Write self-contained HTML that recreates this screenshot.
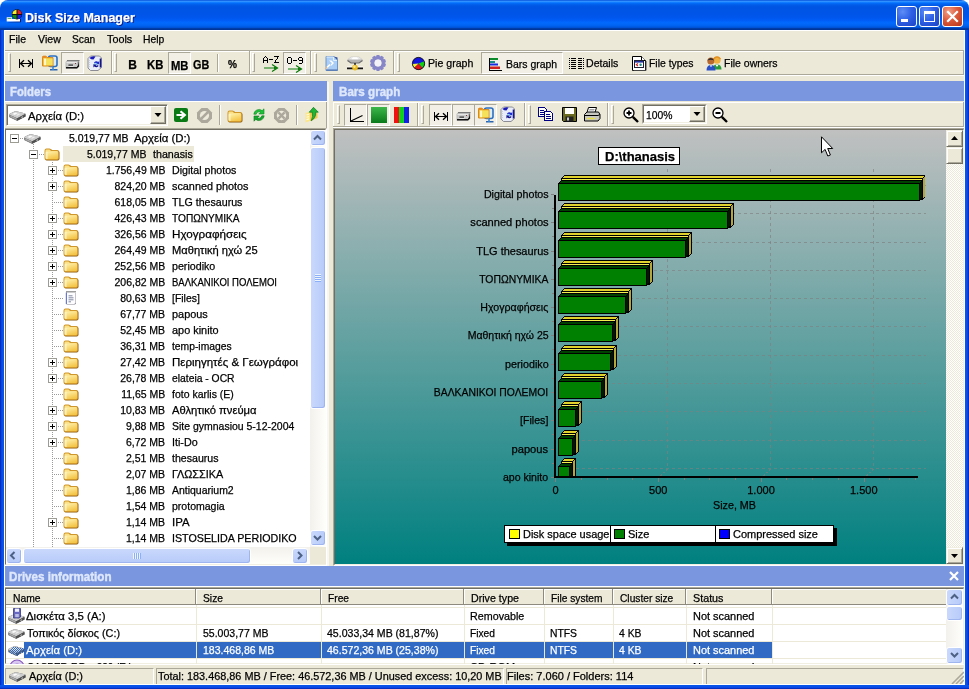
<!DOCTYPE html><html><head><meta charset="utf-8"><title>Disk Size Manager</title><style>
*{box-sizing:border-box;margin:0;padding:0}
html,body{width:969px;height:689px;overflow:hidden;background:#fff}
body{position:relative;font-family:"Liberation Sans",sans-serif;font-size:11px;color:#000;line-height:1}
.a{position:absolute}
.t{position:absolute;white-space:nowrap;line-height:13px;height:13px;transform-origin:0 50%;-webkit-text-stroke:.25px}
.r{text-align:right}
#win{position:absolute;left:0;top:0;width:969px;height:689px;background:#ECE9D8;border-radius:8px 8px 0 0;overflow:hidden;filter:brightness(1)}
#title{position:absolute;left:0;top:0;width:969px;height:30px;background:linear-gradient(to bottom,#0046d8 0%,#3593ff 4%,#288eff 6%,#127dff 8%,#036ffc 10%,#0262ee 14%,#0057e5 20%,#0054e3 24%,#0055eb 56%,#005bf5 66%,#026afe 76%,#0062ef 86%,#0052d6 92%,#0040ab 94%,#003092 100%)}
.hdr{position:absolute;background:#7A96DF;color:#D6DFF5;font-weight:bold;font-size:12px}
.sunk{position:absolute;border:1px solid;border-color:#ACA899 #fff #fff #ACA899}
.grip{position:absolute;width:3px;height:19px;border:1px solid;border-color:#fff #ACA899 #ACA899 #fff}
.vsep{position:absolute;width:2px;border-left:1px solid #ACA899;border-right:1px solid #fff}
.pressed{position:absolute;border:1px solid;border-color:#ACA899 #fff #fff #ACA899;background:#F2F0E6}
.tb{position:absolute;font-weight:bold;font-size:12px;line-height:14px;height:14px;white-space:nowrap}
.wb{position:absolute;top:6px;width:21px;height:21px;border:1px solid #fff;border-radius:3px}
svg{position:absolute;overflow:visible}
</style></head><body>
<div id="win">
<div id="title"></div>
<div class="t" style="left:24.700px;top:10px;font-size:13px;font-weight:bold;color:#fff;line-height:16px;height:16px;text-shadow:1px 1px 0 #0A1883;transform:scaleX(.962)">Disk Size Manager</div>
<svg style="left:6px;top:9px" width="17" height="15" viewBox="0 0 17 15"><path d="M1.200 13.200H14.800V10h-1v2.300z" fill="#0a0a50"/><path d="M0.700 8.300H6V10h8v2.400H0.700z" fill="#fff"/><path d="M1.500 9.200h4v.9h-4z" fill="#2f9a2f"/><circle cx="11" cy="5.400" r="5.100" fill="#101010"/><path d="M10.500 0.800A4.600 4.600 0 0 0 6.400 4.900H10.500z" fill="#f6f02a"/><path d="M11.500 0.800A4.600 4.600 0 0 1 15.600 4.900H11.500z" fill="#e21c28"/><path d="M10.500 5.900H6.400A4.600 4.600 0 0 0 10.500 10z" fill="#0f8a0f"/><path d="M11.500 5.900h4.100A4.600 4.600 0 0 1 11.500 10z" fill="#1a1ae0"/></svg>
<div class="wb" style="left:896px;background:radial-gradient(circle at 30% 25%,#5d8df6 0,#2f61e6 45%,#1c43c4 100%)"><div class="a" style="left:4px;top:12px;width:7px;height:3px;background:#fff"></div></div>
<div class="wb" style="left:919px;background:radial-gradient(circle at 30% 25%,#5d8df6 0,#2f61e6 45%,#1c43c4 100%)"><div class="a" style="left:4px;top:4px;width:11px;height:11px;border:1px solid #fff;border-top:3px solid #fff"></div></div>
<div class="wb" style="left:942px;background:radial-gradient(circle at 30% 25%,#f0a088 0,#dc5a3c 45%,#b83418 100%)"><svg style="left:4px;top:4px" width="11" height="11" viewBox="0 0 11 11"><path d="M1 1L10 10M10 1L1 10" stroke="#fff" stroke-width="2.2" stroke-linecap="square"/></svg></div>
<div class="a" style="left:0;top:30px;width:4px;height:659px;background:linear-gradient(to right,#001EA0 0,#0A40E0 1px,#0855EA 3px,#0855EA 4px)"></div>
<div class="a" style="left:965px;top:30px;width:4px;height:659px;background:linear-gradient(to left,#001EA0 0,#0A40E0 1px,#0855EA 3px,#0855EA 4px)"></div>
<div class="a" style="left:0;top:685px;width:969px;height:4px;background:linear-gradient(to top,#001EA0 0,#0A40E0 1px,#0855EA 3px,#0855EA 4px)"></div>
<div class="t" style="left:9.3px;top:33px;transform:scaleX(0.9594);">File</div>
<div class="t" style="left:37.5px;top:33px;transform:scaleX(0.9644);">View</div>
<div class="t" style="left:71.5px;top:33px;transform:scaleX(0.9285);">Scan</div>
<div class="t" style="left:106.8px;top:33px;transform:scaleX(0.9810);">Tools</div>
<div class="t" style="left:143.3px;top:33px;transform:scaleX(0.9414);">Help</div>
<div class="a" style="left:4px;top:50px;width:961px;height:1px;background:#ACA899"></div>
<div class="a" style="left:4px;top:51px;width:961px;height:1px;background:#fff"></div>
<div class="a" style="left:4px;top:74px;width:961px;height:1px;background:#ACA899"></div>
<div class="a" style="left:4px;top:75px;width:961px;height:1px;background:#fff"></div>
<div class="a" style="left:963px;top:51px;width:1px;height:24px;background:#ACA899"></div>
<div class="grip" style="left:8px;top:53px"></div>
<div class="grip" style="left:114px;top:53px"></div>
<div class="grip" style="left:252px;top:53px"></div>
<div class="grip" style="left:314px;top:53px"></div>
<div class="grip" style="left:397px;top:53px"></div>
<div class="vsep" style="left:111px;top:51px;height:23px"></div>
<div class="vsep" style="left:249px;top:51px;height:23px"></div>
<div class="vsep" style="left:310px;top:51px;height:23px"></div>
<div class="vsep" style="left:393px;top:51px;height:23px"></div>
<div class="vsep" style="left:217px;top:54px;height:18px"></div>
<div class="pressed" style="left:61px;top:52px;width:23px;height:22px"></div>
<div class="pressed" style="left:168px;top:52px;width:23px;height:22px"></div>
<div class="pressed" style="left:283px;top:52px;width:23px;height:22px"></div>
<div class="pressed" style="left:481px;top:52px;width:82px;height:22px"></div>
<div class="t" style="font-size:12px;line-height:14px;height:14px;font-weight:bold;left:128.3px;top:57.5px;">B</div>
<div class="t" style="font-size:12px;line-height:14px;height:14px;font-weight:bold;left:147.3px;top:57.5px;transform:scaleX(0.9398);">KB</div>
<div class="t" style="font-size:12px;line-height:14px;height:14px;font-weight:bold;left:171px;top:58.5px;transform:scaleX(0.9372);">MB</div>
<div class="t" style="font-size:12px;line-height:14px;height:14px;font-weight:bold;left:193.3px;top:57.5px;transform:scaleX(0.9000);">GB</div>
<div class="t" style="font-weight:bold;left:228.3px;top:57.5px;transform:scaleX(0.9201);">%</div>
<div class="t" style="left:428.3px;top:57px;transform:scaleX(0.9634);">Pie graph</div>
<div class="t" style="left:505.6px;top:58px;transform:scaleX(0.9509);">Bars graph</div>
<div class="t" style="left:586.2px;top:57px;transform:scaleX(0.9606);">Details</div>
<div class="t" style="left:649px;top:57px;transform:scaleX(0.9470);">File types</div>
<div class="t" style="left:724px;top:57px;transform:scaleX(0.9529);">File owners</div>
<svg style="left:19px;top:59px" width="15" height="9" viewBox="0 0 15 9" ><path d="M0.5 0v9M13.5 0v9M1 4.5h12" stroke="#000" stroke-width="1" fill="none"/><path d="M1.5 4.5L5 1.2M1.5 4.5L5 7.8M12.5 4.5L9 1.2M12.5 4.5L9 7.8" stroke="#000" stroke-width="1.3" fill="none"/></svg>
<svg style="left:42px;top:55px" width="16" height="16" viewBox="0 0 16 16" ><rect x="6.5" y="1" width="8.5" height="10.5" rx="2" fill="#d8ecfb" stroke="#2c6fc0" stroke-width="1.6"/><path d="M8 14.8h7.5" stroke="#2a64b0" stroke-width="1.4"/><path d="M11 12v3" stroke="#3a86d6" stroke-width="1.6"/><path d="M0.5 2.2q0-1 1-1h2.2q1 0 1 1v0.4h6.3v8.4h-10.5z" fill="#f4c23a" stroke="#d98a1a" stroke-width="1"/><rect x="2" y="3.6" width="8.5" height="6.6" fill="#f6e25a"/><rect x="2" y="3.6" width="2" height="6.6" fill="#fdf6c8"/><rect x="0.6" y="1.2" width="3.6" height="1.6" fill="#e8831c"/></svg>
<svg style="left:65px;top:60px" width="15" height="9" viewBox="0 0 15 9" ><path d="M2 0.5h12.5v6l-2 2H0.5V2z" fill="#b9b9b9"/><path d="M2 0.5h12.5" stroke="#7a7a7a"/><path d="M14 0.5v6l-2 2H1v-1.5h10.5l1.5-1.5z" fill="#111"/><rect x="1.5" y="2" width="10.5" height="5" fill="#c9c9c9"/><rect x="1.5" y="2" width="10.5" height="1" fill="#e6e6e6"/><rect x="3.5" y="4.6" width="4.5" height="1.2" fill="#111"/><rect x="3.5" y="5.8" width="5" height="0.8" fill="#fff"/><rect x="10" y="3" width="1" height="1" fill="#7a3a3a"/></svg>
<svg style="left:87px;top:55px" width="15" height="16" viewBox="0 0 15 16" ><path d="M1 3.5L3.5 1h9L14.5 3v9.5L11 15.5H3.5L1 13z" fill="#e9edf9" stroke="#8c8c94" stroke-width="1"/><path d="M2.5 3q2-2.4 6-1.6L6.5 4.6Q4 4.6 2.5 3z" fill="#1a1ab8"/><path d="M13.5 3.5v9" stroke="#14148c" stroke-width="1.6"/><path d="M2.2 5v8" stroke="#c8c8d0" stroke-width="1.2" stroke-dasharray="1 1"/><path d="M7 7.5q2-2 4.2-0.6l1-1v3.4H8.8l1.1-1.1q-1.2-.8-2.2.3z" fill="#1c2ccc"/><path d="M11.6 11q-2 2-4.2.6l-1 1V9.2h3.4l-1.1 1.1q1.2.8 2.2-.3z" fill="#14148c"/><path d="M7.4 9h3" stroke="#58b8f0" stroke-width="1.2"/></svg>
<svg style="left:263px;top:56px" width="20" height="16" viewBox="0 0 20 16"><path d="M0.5 7V2.5L2.5 0.5L4.5 2.5V7M0.5 4.5H4.5M6 3.5H10M11 0.5H15.5L11.5 6.5H16" stroke="#000" stroke-width="1" fill="none" shape-rendering="crispEdges"/></svg>
<svg style="left:287px;top:57px" width="20" height="16" viewBox="0 0 20 16"><path d="M0.5 1.5V5.5L1.5 6.5H3.5L4.5 5.5V1.5L3.5 0.5H1.5zM6 3.5H10M15.5 3.5H12.5L11.5 2.5V1.5L12.5 0.5H14.5L15.5 1.5V5.5L14.5 6.5H12" stroke="#000" stroke-width="1" fill="none" shape-rendering="crispEdges"/></svg>
<svg style="left:264px;top:64px" width="15" height="8" viewBox="0 0 15 8" ><path d="M0 4h13" stroke="#0a7a0a" stroke-width="1.2"/><path d="M8 0.5L13.5 4L8 7.5" stroke="#0a7a0a" stroke-width="1.2" fill="none"/><path d="M10 2.5L13.5 4L10 5.5z" fill="#0a7a0a"/></svg>
<svg style="left:288px;top:65px" width="15" height="8" viewBox="0 0 15 8" ><path d="M0 4h13" stroke="#0a7a0a" stroke-width="1.2"/><path d="M8 0.5L13.5 4L8 7.5" stroke="#0a7a0a" stroke-width="1.2" fill="none"/><path d="M10 2.5L13.5 4L10 5.5z" fill="#0a7a0a"/></svg>
<svg style="left:325px;top:56px" width="13" height="15" viewBox="0 0 13 15" ><path d="M1 0.5h8l3.5 3.5v10.5H1z" fill="#a9cdf4" stroke="#6f94c8" stroke-width="1"/><path d="M1.5 1h7v3.5h3.5" fill="none" stroke="#e4f1fd" stroke-width="1"/><path d="M9 0.5l3.5 3.5V1.5z" fill="#2a4a9a"/><path d="M1.5 14h11" stroke="#4a6aa8" stroke-width="1.2"/><path d="M1 12.5L5 8.5" stroke="#fff" stroke-width="1.6"/><path d="M4 4.5h2.5L9 7L6.5 9.5H5.2L7 7z" fill="#fff"/><path d="M0.2 13L2 11" stroke="#d8b89a" stroke-width="1.5"/></svg>
<svg style="left:347px;top:56px" width="16" height="15" viewBox="0 0 16 15" ><path d="M0.5 3.5L4 0.8h8L15.5 3.5V5L12 7H4L0.5 5z" fill="#b4b4b4"/><path d="M4 1h8l3 2.5H1z" fill="#e8e8e8"/><path d="M6 1.2h4l1.5 2h-7z" fill="#fff"/><path d="M0.5 4.5L4 7h8l3.5-2.5" stroke="#6e6e6e" fill="none" stroke-width="1.2"/><path d="M8 7v2" stroke="#222" stroke-width="1.6"/><path d="M0 11h16" stroke="#fff" stroke-width="1.2"/><path d="M0 12.4h16" stroke="#111" stroke-width="1.8"/><circle cx="8" cy="11.6" r="2.8" fill="#e8b820"/><circle cx="7.4" cy="10.8" r="1.2" fill="#fbe88a"/></svg>
<svg style="left:370px;top:55px" width="16" height="16" viewBox="-8 -8 16 16"><g fill="#8686c8"><rect x="-1.7" y="-8" width="3.4" height="4" rx="0.8" transform="rotate(0)"/><rect x="-1.7" y="-8" width="3.4" height="4" rx="0.8" transform="rotate(36)"/><rect x="-1.7" y="-8" width="3.4" height="4" rx="0.8" transform="rotate(72)"/><rect x="-1.7" y="-8" width="3.4" height="4" rx="0.8" transform="rotate(108)"/><rect x="-1.7" y="-8" width="3.4" height="4" rx="0.8" transform="rotate(144)"/><rect x="-1.7" y="-8" width="3.4" height="4" rx="0.8" transform="rotate(180)"/><rect x="-1.7" y="-8" width="3.4" height="4" rx="0.8" transform="rotate(216)"/><rect x="-1.7" y="-8" width="3.4" height="4" rx="0.8" transform="rotate(252)"/><rect x="-1.7" y="-8" width="3.4" height="4" rx="0.8" transform="rotate(288)"/><rect x="-1.7" y="-8" width="3.4" height="4" rx="0.8" transform="rotate(324)"/></g><circle r="5.2" fill="none" stroke="#8686c8" stroke-width="3.4"/><circle r="3.4" fill="#f3f2f6"/></svg>
<svg style="left:412px;top:57px" width="13" height="13" viewBox="0 0 13 13" ><circle cx="6.5" cy="6.5" r="6.2" fill="#1414e0"/><path d="M6.5 6.5L12.3 4.2A6.2 6.2 0 0 1 10.6 11.2z" fill="#12d012"/><path d="M6.5 6.5L10.6 11.2A6.2 6.2 0 0 1 2 10.8z" fill="#e01414"/><path d="M6.5 6.5L2 10.8A6.2 6.2 0 0 1 0.4 7z" fill="#f0f030"/><circle cx="6.5" cy="6.5" r="6.1" fill="none" stroke="#111" stroke-width="0.9"/></svg>
<svg style="left:488px;top:58px" width="14" height="13" viewBox="0 0 14 13" ><path d="M1.5 0V12.5H13.5" stroke="#000" stroke-width="1" fill="none" shape-rendering="crispEdges"/><rect x="2" y="0" width="8" height="2" fill="#0a8a2a"/><rect x="2" y="3" width="5" height="2" fill="#1a8a8a"/><rect x="2" y="5.5" width="8" height="2" fill="#1a2ae0"/><rect x="2" y="8.5" width="10" height="2.5" fill="#d02020"/></svg>
<svg style="left:569px;top:58px" width="15" height="12" viewBox="0 0 15 12" ><g fill="#000" shape-rendering="crispEdges"><rect x="0" y="0" width="1" height="1"/><rect x="2" y="0" width="5" height="1"/><rect x="9" y="0" width="4" height="1"/><rect x="14" y="0" width="1" height="1"/><rect x="0" y="2" width="1" height="1"/><rect x="2" y="2" width="5" height="1"/><rect x="9" y="2" width="4" height="1"/><rect x="14" y="2" width="1" height="1"/><rect x="0" y="4" width="1" height="1"/><rect x="2" y="4" width="5" height="1"/><rect x="9" y="4" width="4" height="1"/><rect x="14" y="4" width="1" height="1"/><rect x="0" y="6" width="1" height="1"/><rect x="2" y="6" width="5" height="1"/><rect x="9" y="6" width="4" height="1"/><rect x="14" y="6" width="1" height="1"/><rect x="0" y="8" width="1" height="1"/><rect x="2" y="8" width="5" height="1"/><rect x="9" y="8" width="4" height="1"/><rect x="14" y="8" width="1" height="1"/><rect x="0" y="10" width="1" height="1"/><rect x="2" y="10" width="5" height="1"/><rect x="9" y="10" width="4" height="1"/><rect x="14" y="10" width="1" height="1"/></g></svg>
<svg style="left:632px;top:56px" width="14" height="15" viewBox="0 0 14 15" ><path d="M0.5 0.5h9l4 4v10H0.5z" fill="#fff" stroke="#000" stroke-width="1"/><path d="M9.5 0.5v4h4" fill="#fff" stroke="#000" stroke-width="1"/><path d="M1.5 14.5h12.5V5" stroke="#444" fill="none"/><rect x="2.5" y="4.5" width="9" height="7" fill="#fff" stroke="#223" stroke-width="1"/><rect x="3" y="5" width="8" height="1.6" fill="#2030a0"/><path d="M6 7.5L4.3 8.8L6 10" stroke="#d02020" stroke-width="1.1" fill="none"/><circle cx="8.6" cy="8.8" r="1.2" fill="#1a8a8a"/></svg>
<svg style="left:706px;top:56px" width="17" height="15" viewBox="0 0 17 15" ><circle cx="11" cy="4.2" r="3.6" fill="#f0b040"/><path d="M7.5 3q3.5-4 7 0" stroke="#e09020" stroke-width="1.4" fill="none"/><path d="M6.5 13.5q0-5 4.5-5t4.500 5z" fill="#2a9a3a"/><path d="M9.500 8.800L11 11L12.500 8.800z" fill="#fff"/><circle cx="4.800" cy="5" r="3.500" fill="#b86a30"/><path d="M1.300 4.500q3.500-5 7 0q-3.500-1.500-7 0z" fill="#2a2a30"/><path d="M0.500 14.500q0-5.500 4.500-5.500t4.500 5.500z" fill="#2a50c8"/><path d="M3.600 9.300L5 11.300L6.400 9.300z" fill="#dfe8ff"/></svg>
<div class="hdr" style="left:4px;top:81px;width:323px;height:20px"></div>
<div class="t" style="font-size:12px;line-height:14px;height:14px;font-weight:bold;color:#DEE7FB;left:9.5px;top:85px;transform:scaleX(0.9463);-webkit-text-stroke:.4px;">Folders</div>
<div class="a" style="left:4px;top:101px;width:323px;height:1px;background:#fff"></div>
<div class="a" style="left:327px;top:82px;width:2px;height:484px;background:#F8F7F1"></div>
<div class="a" style="left:326px;top:102px;width:1px;height:26px;background:#ACA899"></div>
<div class="a" style="left:6px;top:104px;width:162px;height:22px;border:1px solid;border-color:#ACA899 #fff #fff #ACA899;box-shadow:inset 1px 1px 0 #716F64,inset -1px -1px 0 #F1EFE2;background:#fff"></div>
<div class="a" style="left:150px;top:106px;width:16px;height:18px;background:#ECE9D8;border:1px solid;border-color:#fff #716F64 #716F64 #fff;box-shadow:inset -1px -1px 0 #ACA899"></div>
<svg style="left:154px;top:113px" width="8" height="4" viewBox="0 0 8 4"><path d="M0.500 0h7L4 4z" fill="#000"/></svg>
<svg style="left:8.5px;top:110.5px" width="17" height="10" viewBox="0 0 17 10" ><path d="M0.300 3.800Q0.300 3 1.200 2.600L5.500 0.400Q6.300 0 7.200 0.200L15.600 2.200Q16.500 2.400 16.500 3.200V5.400L8.800 9.600Q8.200 9.900 7.500 9.600L0.300 6z" fill="#5e5e5e"/><path d="M0.300 3.600Q0.300 3 1.200 2.600L5.500 0.400Q6.300 0 7.200 0.200L15.600 2.200Q16.700 2.500 15.800 3.100L8.800 6.900Q8.200 7.200 7.500 6.900L0.800 4.100z" fill="#cdcdcd"/><path d="M3.200 3.100L6.300 1.500L9 2.100L5.800 3.900z" fill="#fafafa"/><path d="M9.500 2.400L11.500 2.900L8.500 4.700L6.800 4.200z" fill="#ececec"/><path d="M0.300 3.900L8.100 7.200V9.800L0.300 6z" fill="#8e8e8e"/><path d="M8.200 7.200L16.500 3.200V5.400L8.200 9.800z" fill="#505050"/><path d="M12.400 6l1.600-.8v1.100l-1.600.8z" fill="#d0d0d0"/><path d="M1.500 5.200L7 7.700" stroke="#c8c8c8" stroke-width=".6"/></svg>
<div class="t" style="left:28.3px;top:109.5px;transform:scaleX(1.0284);">Αρχεία (D:)</div>
<svg style="left:174px;top:108px" width="14" height="14" viewBox="0 0 14 14" ><rect x="0" y="0" width="14" height="14" rx="2" fill="#0a7a14"/><path d="M2.500 7h7" stroke="#fff" stroke-width="2.200"/><path d="M6.500 3.200L10.800 7L6.500 10.800" stroke="#fff" stroke-width="2.200" fill="none" stroke-linejoin="miter"/></svg>
<svg style="left:197px;top:108px" width="15" height="15" viewBox="0 0 15 15" ><path d="M4.500 0h6l4.500 4.500v6l-4.500 4.500h-6l-4.500-4.500v-6z" fill="#ACA89C"/><circle cx="7.500" cy="7.500" r="4.600" fill="#EDEADB"/><path d="M3.800 11.200L11.200 3.800" stroke="#ACA89C" stroke-width="2.600"/></svg>
<div class="vsep" style="left:219px;top:105px;height:20px"></div>
<svg width="0" height="0" style="left:0;top:0"><defs><linearGradient id="fg" x1="0" y1="0" x2="0.500" y2="1"><stop offset="0" stop-color="#FFF3AE"/><stop offset="1" stop-color="#F4C64A"/></linearGradient></defs></svg>
<svg style="left:227px;top:110px" width="16" height="13" viewBox="0 0 16 13"><path d="M1 3.200Q1 1 3 1H6Q7.500 1 8.200 2.600H13.500Q15.500 2.600 15.500 4.600V10.800Q15.500 12.500 13.700 12.500H2.700Q1 12.500 1 10.800z" fill="#8a5c10"/><path d="M0.500 2.700Q0.500 0.500 2.500 0.500H5.500Q7 0.500 7.700 2.100H13Q15 2.100 15 4.100V10.200Q15 11.900 13.200 11.900H2.200Q0.500 11.900 0.500 10.200z" fill="#cf962a"/><path d="M1.400 2.800Q1.400 1.400 2.800 1.400H5.300Q6.300 1.400 6.900 2.900H12.800Q14.100 2.900 14.100 4.300V4.500H1.400z" fill="#fbe08a"/><path d="M1.500 5Q1.500 3.800 2.700 3.800H12.900Q14.100 3.800 14.100 5V9.800Q14.100 11 12.900 11H2.700Q1.500 11 1.500 9.800z" fill="url(#fg)"/><path d="M1.500 5Q1.500 3.800 2.700 3.800H3.600V11H2.700Q1.500 11 1.500 9.800z" fill="#fff8d0" opacity=".7"/></svg>
<svg style="left:253px;top:108px" width="12" height="14" viewBox="0 0 12 14" ><path d="M0.800 6.200A5.200 5.200 0 0 1 9.200 2.600L11 0.800v5.200H5.800L7.600 4.200A3 3 0 0 0 3.200 6.200z" fill="#1fc23a" stroke="#0c8a22" stroke-width=".6"/><path d="M11.200 7.800A5.200 5.200 0 0 1 2.800 11.400L1 13.200V8h5.200L4.400 9.800A3 3 0 0 0 8.800 7.800z" fill="#14a82e" stroke="#0a7a1c" stroke-width=".6"/></svg>
<svg style="left:274px;top:108px" width="15" height="15" viewBox="0 0 15 15" ><path d="M4.500 0h6l4.500 4.500v6l-4.500 4.500h-6l-4.500-4.500v-6z" fill="#ACA89C"/><circle cx="7.500" cy="7.500" r="4.700" fill="#EDEADB"/><path d="M4.400 4.400L10.600 10.600M10.600 4.400L4.400 10.600" stroke="#ACA89C" stroke-width="2.400"/></svg>
<div class="vsep" style="left:296px;top:105px;height:20px"></div>
<svg style="left:304px;top:107px" width="15" height="16" viewBox="0 0 15 16" ><path d="M1.500 6L6 4.500V14L1.500 15.500z" fill="#fbe68a"/><path d="M6 4.500h5.500l2 2V11L6 14z" fill="#f3c84e"/><path d="M2.500 8l2.500-.7M2.500 10.300l2.500-.7M2.500 12.600l2.500-.7" stroke="#fffbe0" stroke-width="1.100"/><path d="M9.500 0.300L14.300 5.200H11.700Q12 11 7.200 13.800Q9.400 9.500 8.300 5.200H5.200z" fill="#1fb636" stroke="#0b7a1e" stroke-width=".7"/></svg>
<div class="a" style="left:4px;top:128px;width:323px;height:438px;background:#fff;border:1px solid;border-color:#ACA899 #fff #fff #ACA899"></div>
<div class="a" style="left:5px;top:129px;width:321px;height:436px;border:1px solid;border-color:#716F64 #F1EFE2 #F1EFE2 #716F64"></div>
<div class="a" style="left:6px;top:130px;width:304px;height:417px;overflow:hidden">
<div class="a" style="left:27px;top:14px;width:1px;height:403px;background:repeating-linear-gradient(to bottom,#9a9a9a 0 1px,transparent 1px 2px)"></div>
<div class="a" style="left:46px;top:32px;width:1px;height:385px;background:repeating-linear-gradient(to bottom,#9a9a9a 0 1px,transparent 1px 2px)"></div>
<div class="a" style="left:4px;top:4px;width:9px;height:9px;border:1px solid #9C9C94;background:#fff"></div>
<div class="a" style="left:6px;top:8px;width:5px;height:1px;background:#000"></div>
<div class="a" style="left:14px;top:8px;width:5px;height:1px;background:repeating-linear-gradient(to right,#9a9a9a 0 1px,transparent 1px 2px)"></div>
<svg style="left:18px;top:4px" width="17" height="10" viewBox="0 0 17 10" ><path d="M0.300 3.800Q0.300 3 1.200 2.600L5.500 0.400Q6.300 0 7.200 0.200L15.600 2.200Q16.500 2.400 16.500 3.200V5.400L8.800 9.600Q8.200 9.900 7.500 9.600L0.300 6z" fill="#5e5e5e"/><path d="M0.300 3.600Q0.300 3 1.200 2.600L5.500 0.400Q6.300 0 7.200 0.200L15.600 2.200Q16.700 2.500 15.800 3.100L8.800 6.900Q8.200 7.200 7.500 6.900L0.800 4.100z" fill="#cdcdcd"/><path d="M3.200 3.100L6.300 1.500L9 2.100L5.800 3.900z" fill="#fafafa"/><path d="M9.500 2.400L11.500 2.900L8.500 4.700L6.800 4.200z" fill="#ececec"/><path d="M0.300 3.900L8.100 7.200V9.800L0.300 6z" fill="#8e8e8e"/><path d="M8.200 7.200L16.500 3.200V5.400L8.200 9.800z" fill="#505050"/><path d="M12.400 6l1.600-.8v1.100l-1.600.8z" fill="#d0d0d0"/><path d="M1.500 5.200L7 7.700" stroke="#c8c8c8" stroke-width=".6"/></svg>
<div class="t" style="left:59.95px;top:2px;width:62.46px;transform-origin:100% 50%;transform:scaleX(0.9530);">5.019,77 MB</div>
<div class="t" style="left:128px;top:2px;transform:scaleX(1.0358);">Αρχεία (D:)</div>
<div class="a" style="left:23px;top:20px;width:9px;height:9px;border:1px solid #9C9C94;background:#fff"></div>
<div class="a" style="left:25px;top:24px;width:5px;height:1px;background:#000"></div>
<div class="a" style="left:33px;top:24px;width:5px;height:1px;background:repeating-linear-gradient(to right,#9a9a9a 0 1px,transparent 1px 2px)"></div>
<svg style="left:38px;top:18px" width="16" height="13" viewBox="0 0 16 13"><path d="M1 3.200Q1 1 3 1H6Q7.500 1 8.200 2.600H13.500Q15.500 2.600 15.500 4.600V10.800Q15.500 12.500 13.700 12.500H2.700Q1 12.500 1 10.800z" fill="#8a5c10"/><path d="M0.500 2.700Q0.500 0.500 2.500 0.500H5.500Q7 0.500 7.700 2.100H13Q15 2.100 15 4.100V10.200Q15 11.900 13.200 11.900H2.200Q0.500 11.900 0.500 10.200z" fill="#cf962a"/><path d="M1.400 2.800Q1.400 1.400 2.800 1.400H5.300Q6.300 1.400 6.900 2.900H12.800Q14.100 2.900 14.100 4.300V4.500H1.400z" fill="#fbe08a"/><path d="M1.500 5Q1.500 3.800 2.700 3.800H12.900Q14.100 3.800 14.100 5V9.800Q14.100 11 12.900 11H2.700Q1.500 11 1.500 9.800z" fill="url(#fg)"/><path d="M1.500 5Q1.500 3.800 2.700 3.800H3.600V11H2.700Q1.500 11 1.500 9.800z" fill="#fff8d0" opacity=".7"/></svg>
<div class="a" style="left:57px;top:16px;width:131px;height:16px;background:#ECE9D8"></div>
<div class="t" style="left:77.55px;top:18px;width:62.46px;transform-origin:100% 50%;transform:scaleX(0.9530);">5.019,77 MB</div>
<div class="t" style="left:147.3px;top:18px;transform:scaleX(0.9707);">thanasis</div>
<div class="a" style="left:42px;top:36px;width:9px;height:9px;border:1px solid #9C9C94;background:#fff"></div>
<div class="a" style="left:44px;top:40px;width:5px;height:1px;background:#000"></div>
<div class="a" style="left:46px;top:38px;width:1px;height:5px;background:#000"></div>
<div class="a" style="left:52px;top:40px;width:5px;height:1px;background:repeating-linear-gradient(to right,#9a9a9a 0 1px,transparent 1px 2px)"></div>
<svg style="left:57px;top:34px" width="16" height="13" viewBox="0 0 16 13"><path d="M1 3.200Q1 1 3 1H6Q7.500 1 8.200 2.600H13.500Q15.500 2.600 15.500 4.600V10.800Q15.500 12.500 13.700 12.500H2.700Q1 12.500 1 10.800z" fill="#8a5c10"/><path d="M0.500 2.700Q0.500 0.500 2.500 0.500H5.500Q7 0.500 7.700 2.100H13Q15 2.100 15 4.100V10.200Q15 11.900 13.200 11.900H2.200Q0.500 11.900 0.500 10.200z" fill="#cf962a"/><path d="M1.400 2.800Q1.400 1.400 2.800 1.400H5.300Q6.300 1.400 6.900 2.900H12.800Q14.100 2.900 14.100 4.300V4.500H1.400z" fill="#fbe08a"/><path d="M1.500 5Q1.500 3.800 2.700 3.800H12.900Q14.100 3.800 14.100 5V9.800Q14.100 11 12.900 11H2.700Q1.500 11 1.500 9.800z" fill="url(#fg)"/><path d="M1.500 5Q1.500 3.800 2.700 3.800H3.600V11H2.700Q1.500 11 1.500 9.800z" fill="#fff8d0" opacity=".7"/></svg>
<div class="t" style="left:96.85px;top:34px;width:62.46px;transform-origin:100% 50%;transform:scaleX(0.9530);">1.756,49 MB</div>
<div class="t" style="left:166px;top:34px;transform:scaleX(0.9657);">Digital photos</div>
<div class="a" style="left:42px;top:52px;width:9px;height:9px;border:1px solid #9C9C94;background:#fff"></div>
<div class="a" style="left:44px;top:56px;width:5px;height:1px;background:#000"></div>
<div class="a" style="left:46px;top:54px;width:1px;height:5px;background:#000"></div>
<div class="a" style="left:52px;top:56px;width:5px;height:1px;background:repeating-linear-gradient(to right,#9a9a9a 0 1px,transparent 1px 2px)"></div>
<svg style="left:57px;top:50px" width="16" height="13" viewBox="0 0 16 13"><path d="M1 3.200Q1 1 3 1H6Q7.500 1 8.200 2.600H13.500Q15.500 2.600 15.500 4.600V10.800Q15.500 12.500 13.700 12.500H2.700Q1 12.500 1 10.800z" fill="#8a5c10"/><path d="M0.500 2.700Q0.500 0.500 2.500 0.500H5.500Q7 0.500 7.700 2.100H13Q15 2.100 15 4.100V10.200Q15 11.900 13.200 11.900H2.200Q0.500 11.900 0.500 10.200z" fill="#cf962a"/><path d="M1.400 2.800Q1.400 1.400 2.800 1.400H5.300Q6.300 1.400 6.900 2.900H12.800Q14.100 2.900 14.100 4.300V4.500H1.400z" fill="#fbe08a"/><path d="M1.500 5Q1.500 3.800 2.700 3.800H12.900Q14.100 3.800 14.100 5V9.800Q14.100 11 12.900 11H2.700Q1.500 11 1.500 9.800z" fill="url(#fg)"/><path d="M1.500 5Q1.500 3.800 2.700 3.800H3.600V11H2.700Q1.500 11 1.500 9.800z" fill="#fff8d0" opacity=".7"/></svg>
<div class="t" style="left:106.04px;top:50px;width:53.27px;transform-origin:100% 50%;transform:scaleX(0.9530);">824,20 MB</div>
<div class="t" style="left:166px;top:50px;transform:scaleX(0.9852);">scanned photos</div>
<div class="a" style="left:48px;top:72px;width:9px;height:1px;background:repeating-linear-gradient(to right,#9a9a9a 0 1px,transparent 1px 2px)"></div>
<svg style="left:57px;top:66px" width="16" height="13" viewBox="0 0 16 13"><path d="M1 3.200Q1 1 3 1H6Q7.500 1 8.200 2.600H13.500Q15.500 2.600 15.500 4.600V10.800Q15.500 12.500 13.700 12.500H2.700Q1 12.500 1 10.800z" fill="#8a5c10"/><path d="M0.500 2.700Q0.500 0.500 2.500 0.500H5.500Q7 0.500 7.700 2.100H13Q15 2.100 15 4.100V10.200Q15 11.900 13.200 11.900H2.200Q0.500 11.900 0.500 10.200z" fill="#cf962a"/><path d="M1.400 2.800Q1.400 1.400 2.800 1.400H5.300Q6.300 1.400 6.900 2.900H12.800Q14.100 2.900 14.100 4.300V4.500H1.400z" fill="#fbe08a"/><path d="M1.500 5Q1.500 3.800 2.700 3.800H12.900Q14.100 3.800 14.100 5V9.800Q14.100 11 12.900 11H2.700Q1.500 11 1.500 9.800z" fill="url(#fg)"/><path d="M1.500 5Q1.500 3.800 2.700 3.800H3.600V11H2.700Q1.500 11 1.500 9.800z" fill="#fff8d0" opacity=".7"/></svg>
<div class="t" style="left:106.04px;top:66px;width:53.27px;transform-origin:100% 50%;transform:scaleX(0.9530);">618,05 MB</div>
<div class="t" style="left:166px;top:66px;transform:scaleX(0.9682);">TLG thesaurus</div>
<div class="a" style="left:42px;top:84px;width:9px;height:9px;border:1px solid #9C9C94;background:#fff"></div>
<div class="a" style="left:44px;top:88px;width:5px;height:1px;background:#000"></div>
<div class="a" style="left:46px;top:86px;width:1px;height:5px;background:#000"></div>
<div class="a" style="left:52px;top:88px;width:5px;height:1px;background:repeating-linear-gradient(to right,#9a9a9a 0 1px,transparent 1px 2px)"></div>
<svg style="left:57px;top:82px" width="16" height="13" viewBox="0 0 16 13"><path d="M1 3.200Q1 1 3 1H6Q7.500 1 8.200 2.600H13.500Q15.500 2.600 15.500 4.600V10.800Q15.500 12.500 13.700 12.500H2.700Q1 12.500 1 10.800z" fill="#8a5c10"/><path d="M0.500 2.700Q0.500 0.500 2.500 0.500H5.500Q7 0.500 7.700 2.100H13Q15 2.100 15 4.100V10.200Q15 11.900 13.200 11.900H2.200Q0.500 11.900 0.500 10.200z" fill="#cf962a"/><path d="M1.400 2.800Q1.400 1.400 2.800 1.400H5.300Q6.300 1.400 6.900 2.900H12.800Q14.100 2.900 14.100 4.300V4.500H1.400z" fill="#fbe08a"/><path d="M1.500 5Q1.500 3.800 2.700 3.800H12.900Q14.100 3.800 14.100 5V9.800Q14.100 11 12.900 11H2.700Q1.500 11 1.500 9.800z" fill="url(#fg)"/><path d="M1.500 5Q1.500 3.800 2.700 3.800H3.600V11H2.700Q1.500 11 1.500 9.800z" fill="#fff8d0" opacity=".7"/></svg>
<div class="t" style="left:106.04px;top:82px;width:53.27px;transform-origin:100% 50%;transform:scaleX(0.9530);">426,43 MB</div>
<div class="t" style="left:166px;top:82px;transform:scaleX(0.9207);">ΤΟΠΩΝΥΜΙΚΑ</div>
<div class="a" style="left:42px;top:100px;width:9px;height:9px;border:1px solid #9C9C94;background:#fff"></div>
<div class="a" style="left:44px;top:104px;width:5px;height:1px;background:#000"></div>
<div class="a" style="left:46px;top:102px;width:1px;height:5px;background:#000"></div>
<div class="a" style="left:52px;top:104px;width:5px;height:1px;background:repeating-linear-gradient(to right,#9a9a9a 0 1px,transparent 1px 2px)"></div>
<svg style="left:57px;top:98px" width="16" height="13" viewBox="0 0 16 13"><path d="M1 3.200Q1 1 3 1H6Q7.500 1 8.200 2.600H13.500Q15.500 2.600 15.500 4.600V10.800Q15.500 12.500 13.700 12.500H2.700Q1 12.500 1 10.800z" fill="#8a5c10"/><path d="M0.500 2.700Q0.500 0.500 2.500 0.500H5.500Q7 0.500 7.700 2.100H13Q15 2.100 15 4.100V10.200Q15 11.900 13.200 11.900H2.200Q0.500 11.900 0.500 10.200z" fill="#cf962a"/><path d="M1.400 2.800Q1.400 1.400 2.800 1.400H5.300Q6.300 1.400 6.900 2.900H12.800Q14.100 2.900 14.100 4.300V4.500H1.400z" fill="#fbe08a"/><path d="M1.500 5Q1.500 3.800 2.700 3.800H12.900Q14.100 3.800 14.100 5V9.800Q14.100 11 12.900 11H2.700Q1.500 11 1.500 9.800z" fill="url(#fg)"/><path d="M1.500 5Q1.500 3.800 2.700 3.800H3.600V11H2.700Q1.500 11 1.500 9.800z" fill="#fff8d0" opacity=".7"/></svg>
<div class="t" style="left:106.04px;top:98px;width:53.27px;transform-origin:100% 50%;transform:scaleX(0.9530);">326,56 MB</div>
<div class="t" style="left:166px;top:98px;transform:scaleX(1.0603);">Ηχογραφήσεις</div>
<div class="a" style="left:42px;top:116px;width:9px;height:9px;border:1px solid #9C9C94;background:#fff"></div>
<div class="a" style="left:44px;top:120px;width:5px;height:1px;background:#000"></div>
<div class="a" style="left:46px;top:118px;width:1px;height:5px;background:#000"></div>
<div class="a" style="left:52px;top:120px;width:5px;height:1px;background:repeating-linear-gradient(to right,#9a9a9a 0 1px,transparent 1px 2px)"></div>
<svg style="left:57px;top:114px" width="16" height="13" viewBox="0 0 16 13"><path d="M1 3.200Q1 1 3 1H6Q7.500 1 8.200 2.600H13.500Q15.500 2.600 15.500 4.600V10.800Q15.500 12.500 13.700 12.500H2.700Q1 12.500 1 10.800z" fill="#8a5c10"/><path d="M0.500 2.700Q0.500 0.500 2.500 0.500H5.500Q7 0.500 7.700 2.100H13Q15 2.100 15 4.100V10.200Q15 11.900 13.200 11.900H2.200Q0.500 11.900 0.500 10.200z" fill="#cf962a"/><path d="M1.400 2.800Q1.400 1.400 2.800 1.400H5.300Q6.300 1.400 6.900 2.900H12.800Q14.100 2.900 14.100 4.300V4.500H1.400z" fill="#fbe08a"/><path d="M1.500 5Q1.500 3.800 2.700 3.800H12.900Q14.100 3.800 14.100 5V9.800Q14.100 11 12.900 11H2.700Q1.500 11 1.500 9.800z" fill="url(#fg)"/><path d="M1.500 5Q1.500 3.800 2.700 3.800H3.600V11H2.700Q1.500 11 1.500 9.800z" fill="#fff8d0" opacity=".7"/></svg>
<div class="t" style="left:106.04px;top:114px;width:53.27px;transform-origin:100% 50%;transform:scaleX(0.9530);">264,49 MB</div>
<div class="t" style="left:166px;top:114px;transform:scaleX(1.0112);">Μαθητική ηχώ 25</div>
<div class="a" style="left:42px;top:132px;width:9px;height:9px;border:1px solid #9C9C94;background:#fff"></div>
<div class="a" style="left:44px;top:136px;width:5px;height:1px;background:#000"></div>
<div class="a" style="left:46px;top:134px;width:1px;height:5px;background:#000"></div>
<div class="a" style="left:52px;top:136px;width:5px;height:1px;background:repeating-linear-gradient(to right,#9a9a9a 0 1px,transparent 1px 2px)"></div>
<svg style="left:57px;top:130px" width="16" height="13" viewBox="0 0 16 13"><path d="M1 3.200Q1 1 3 1H6Q7.500 1 8.200 2.600H13.500Q15.500 2.600 15.500 4.600V10.800Q15.500 12.500 13.700 12.500H2.700Q1 12.500 1 10.800z" fill="#8a5c10"/><path d="M0.500 2.700Q0.500 0.500 2.500 0.500H5.500Q7 0.500 7.700 2.100H13Q15 2.100 15 4.100V10.200Q15 11.900 13.200 11.900H2.200Q0.500 11.900 0.500 10.200z" fill="#cf962a"/><path d="M1.400 2.800Q1.400 1.400 2.800 1.400H5.300Q6.300 1.400 6.900 2.900H12.800Q14.100 2.900 14.100 4.300V4.500H1.400z" fill="#fbe08a"/><path d="M1.500 5Q1.500 3.800 2.700 3.800H12.900Q14.100 3.800 14.100 5V9.800Q14.100 11 12.900 11H2.700Q1.500 11 1.500 9.800z" fill="url(#fg)"/><path d="M1.500 5Q1.500 3.800 2.700 3.800H3.600V11H2.700Q1.500 11 1.500 9.800z" fill="#fff8d0" opacity=".7"/></svg>
<div class="t" style="left:106.04px;top:130px;width:53.27px;transform-origin:100% 50%;transform:scaleX(0.9530);">252,56 MB</div>
<div class="t" style="left:166px;top:130px;transform:scaleX(0.9696);">periodiko</div>
<div class="a" style="left:42px;top:148px;width:9px;height:9px;border:1px solid #9C9C94;background:#fff"></div>
<div class="a" style="left:44px;top:152px;width:5px;height:1px;background:#000"></div>
<div class="a" style="left:46px;top:150px;width:1px;height:5px;background:#000"></div>
<div class="a" style="left:52px;top:152px;width:5px;height:1px;background:repeating-linear-gradient(to right,#9a9a9a 0 1px,transparent 1px 2px)"></div>
<svg style="left:57px;top:146px" width="16" height="13" viewBox="0 0 16 13"><path d="M1 3.200Q1 1 3 1H6Q7.500 1 8.200 2.600H13.500Q15.500 2.600 15.500 4.600V10.800Q15.500 12.500 13.700 12.500H2.700Q1 12.500 1 10.800z" fill="#8a5c10"/><path d="M0.500 2.700Q0.500 0.500 2.500 0.500H5.500Q7 0.500 7.700 2.100H13Q15 2.100 15 4.100V10.200Q15 11.900 13.200 11.900H2.200Q0.500 11.900 0.500 10.200z" fill="#cf962a"/><path d="M1.400 2.800Q1.400 1.400 2.800 1.400H5.300Q6.300 1.400 6.900 2.900H12.800Q14.100 2.900 14.100 4.300V4.500H1.400z" fill="#fbe08a"/><path d="M1.500 5Q1.500 3.800 2.700 3.800H12.900Q14.100 3.800 14.100 5V9.800Q14.100 11 12.900 11H2.700Q1.500 11 1.500 9.800z" fill="url(#fg)"/><path d="M1.500 5Q1.500 3.800 2.700 3.800H3.600V11H2.700Q1.500 11 1.500 9.800z" fill="#fff8d0" opacity=".7"/></svg>
<div class="t" style="left:106.04px;top:146px;width:53.27px;transform-origin:100% 50%;transform:scaleX(0.9530);">206,82 MB</div>
<div class="t" style="left:166px;top:146px;transform:scaleX(0.8665);">ΒΑΛΚΑΝΙΚΟΙ ΠΟΛΕΜΟΙ</div>
<div class="a" style="left:48px;top:168px;width:9px;height:1px;background:repeating-linear-gradient(to right,#9a9a9a 0 1px,transparent 1px 2px)"></div>
<svg style="left:59px;top:161px" width="12" height="14" viewBox="0 0 12 14" ><path d="M1.500 2h9.500v10.500l-1 1h-8.500z" fill="#8a8a92"/><path d="M0.800 1.500h9.700v10.200l-1.200 1.200h-8.500z" fill="#fdfdff"/><path d="M0.800 1.500h1.200v11.400h-1.200z" fill="#6a78c8"/><path d="M1.500 0.800h9" stroke="#3a3a3a" stroke-width="1.600" stroke-dasharray="1 1"/><path d="M3.500 4.800h4M3.500 6.800h5M3.500 8.800h5M3.500 10.800h2.500" stroke="#8088a0" stroke-width="1"/></svg>
<div class="t" style="left:112.17px;top:162px;width:47.15px;transform-origin:100% 50%;transform:scaleX(0.9530);">80,63 MB</div>
<div class="t" style="left:166px;top:162px;transform:scaleX(0.9474);">[Files]</div>
<div class="a" style="left:48px;top:184px;width:9px;height:1px;background:repeating-linear-gradient(to right,#9a9a9a 0 1px,transparent 1px 2px)"></div>
<svg style="left:57px;top:178px" width="16" height="13" viewBox="0 0 16 13"><path d="M1 3.200Q1 1 3 1H6Q7.500 1 8.200 2.600H13.500Q15.500 2.600 15.500 4.600V10.800Q15.500 12.500 13.700 12.500H2.700Q1 12.500 1 10.800z" fill="#8a5c10"/><path d="M0.500 2.700Q0.500 0.500 2.500 0.500H5.500Q7 0.500 7.700 2.100H13Q15 2.100 15 4.100V10.200Q15 11.900 13.200 11.900H2.200Q0.500 11.900 0.500 10.200z" fill="#cf962a"/><path d="M1.400 2.800Q1.400 1.400 2.800 1.400H5.300Q6.300 1.400 6.900 2.900H12.800Q14.100 2.900 14.100 4.300V4.500H1.400z" fill="#fbe08a"/><path d="M1.500 5Q1.500 3.800 2.700 3.800H12.900Q14.100 3.800 14.100 5V9.800Q14.100 11 12.900 11H2.700Q1.500 11 1.500 9.800z" fill="url(#fg)"/><path d="M1.500 5Q1.500 3.800 2.700 3.800H3.600V11H2.700Q1.500 11 1.500 9.800z" fill="#fff8d0" opacity=".7"/></svg>
<div class="t" style="left:112.17px;top:178px;width:47.15px;transform-origin:100% 50%;transform:scaleX(0.9530);">67,77 MB</div>
<div class="t" style="left:166px;top:178px;transform:scaleX(0.9910);">papous</div>
<div class="a" style="left:48px;top:200px;width:9px;height:1px;background:repeating-linear-gradient(to right,#9a9a9a 0 1px,transparent 1px 2px)"></div>
<svg style="left:57px;top:194px" width="16" height="13" viewBox="0 0 16 13"><path d="M1 3.200Q1 1 3 1H6Q7.500 1 8.200 2.600H13.500Q15.500 2.600 15.500 4.600V10.800Q15.500 12.500 13.700 12.500H2.700Q1 12.500 1 10.800z" fill="#8a5c10"/><path d="M0.500 2.700Q0.500 0.500 2.500 0.500H5.500Q7 0.500 7.700 2.100H13Q15 2.100 15 4.100V10.200Q15 11.900 13.200 11.900H2.200Q0.500 11.900 0.500 10.200z" fill="#cf962a"/><path d="M1.400 2.800Q1.400 1.400 2.800 1.400H5.300Q6.300 1.400 6.900 2.900H12.800Q14.100 2.900 14.100 4.300V4.500H1.400z" fill="#fbe08a"/><path d="M1.500 5Q1.500 3.800 2.700 3.800H12.900Q14.100 3.800 14.100 5V9.800Q14.100 11 12.900 11H2.700Q1.500 11 1.500 9.800z" fill="url(#fg)"/><path d="M1.500 5Q1.500 3.800 2.700 3.800H3.600V11H2.700Q1.500 11 1.500 9.800z" fill="#fff8d0" opacity=".7"/></svg>
<div class="t" style="left:112.17px;top:194px;width:47.15px;transform-origin:100% 50%;transform:scaleX(0.9530);">52,45 MB</div>
<div class="t" style="left:166px;top:194px;transform:scaleX(0.9910);">apo kinito</div>
<div class="a" style="left:48px;top:216px;width:9px;height:1px;background:repeating-linear-gradient(to right,#9a9a9a 0 1px,transparent 1px 2px)"></div>
<svg style="left:57px;top:210px" width="16" height="13" viewBox="0 0 16 13"><path d="M1 3.200Q1 1 3 1H6Q7.500 1 8.200 2.600H13.500Q15.500 2.600 15.500 4.600V10.800Q15.500 12.500 13.700 12.500H2.700Q1 12.500 1 10.800z" fill="#8a5c10"/><path d="M0.500 2.700Q0.500 0.500 2.500 0.500H5.500Q7 0.500 7.700 2.100H13Q15 2.100 15 4.100V10.200Q15 11.900 13.200 11.900H2.200Q0.500 11.900 0.500 10.200z" fill="#cf962a"/><path d="M1.400 2.800Q1.400 1.400 2.800 1.400H5.300Q6.300 1.400 6.900 2.900H12.800Q14.100 2.900 14.100 4.300V4.500H1.400z" fill="#fbe08a"/><path d="M1.500 5Q1.500 3.800 2.700 3.800H12.900Q14.100 3.800 14.100 5V9.800Q14.100 11 12.900 11H2.700Q1.500 11 1.500 9.800z" fill="url(#fg)"/><path d="M1.500 5Q1.500 3.800 2.700 3.800H3.600V11H2.700Q1.500 11 1.500 9.800z" fill="#fff8d0" opacity=".7"/></svg>
<div class="t" style="left:112.17px;top:210px;width:47.15px;transform-origin:100% 50%;transform:scaleX(0.9530);">36,31 MB</div>
<div class="t" style="left:166px;top:210px;transform:scaleX(0.9372);">temp-images</div>
<div class="a" style="left:42px;top:228px;width:9px;height:9px;border:1px solid #9C9C94;background:#fff"></div>
<div class="a" style="left:44px;top:232px;width:5px;height:1px;background:#000"></div>
<div class="a" style="left:46px;top:230px;width:1px;height:5px;background:#000"></div>
<div class="a" style="left:52px;top:232px;width:5px;height:1px;background:repeating-linear-gradient(to right,#9a9a9a 0 1px,transparent 1px 2px)"></div>
<svg style="left:57px;top:226px" width="16" height="13" viewBox="0 0 16 13"><path d="M1 3.200Q1 1 3 1H6Q7.500 1 8.200 2.600H13.500Q15.500 2.600 15.500 4.600V10.800Q15.500 12.500 13.700 12.500H2.700Q1 12.500 1 10.800z" fill="#8a5c10"/><path d="M0.500 2.700Q0.500 0.500 2.500 0.500H5.500Q7 0.500 7.700 2.100H13Q15 2.100 15 4.100V10.200Q15 11.900 13.200 11.900H2.200Q0.500 11.900 0.500 10.200z" fill="#cf962a"/><path d="M1.400 2.800Q1.400 1.400 2.800 1.400H5.300Q6.300 1.400 6.900 2.900H12.800Q14.100 2.900 14.100 4.300V4.500H1.400z" fill="#fbe08a"/><path d="M1.500 5Q1.500 3.800 2.700 3.800H12.900Q14.100 3.800 14.100 5V9.800Q14.100 11 12.900 11H2.700Q1.500 11 1.500 9.800z" fill="url(#fg)"/><path d="M1.500 5Q1.500 3.800 2.700 3.800H3.600V11H2.700Q1.500 11 1.500 9.800z" fill="#fff8d0" opacity=".7"/></svg>
<div class="t" style="left:112.17px;top:226px;width:47.15px;transform-origin:100% 50%;transform:scaleX(0.9530);">27,42 MB</div>
<div class="t" style="left:166px;top:226px;transform:scaleX(1.0450);">Περιηγητές &amp; Γεωγράφοι</div>
<div class="a" style="left:42px;top:244px;width:9px;height:9px;border:1px solid #9C9C94;background:#fff"></div>
<div class="a" style="left:44px;top:248px;width:5px;height:1px;background:#000"></div>
<div class="a" style="left:46px;top:246px;width:1px;height:5px;background:#000"></div>
<div class="a" style="left:52px;top:248px;width:5px;height:1px;background:repeating-linear-gradient(to right,#9a9a9a 0 1px,transparent 1px 2px)"></div>
<svg style="left:57px;top:242px" width="16" height="13" viewBox="0 0 16 13"><path d="M1 3.200Q1 1 3 1H6Q7.500 1 8.200 2.600H13.500Q15.500 2.600 15.500 4.600V10.800Q15.500 12.500 13.700 12.500H2.700Q1 12.500 1 10.800z" fill="#8a5c10"/><path d="M0.500 2.700Q0.500 0.500 2.500 0.500H5.500Q7 0.500 7.700 2.100H13Q15 2.100 15 4.100V10.200Q15 11.900 13.200 11.900H2.200Q0.500 11.900 0.500 10.200z" fill="#cf962a"/><path d="M1.400 2.800Q1.400 1.400 2.800 1.400H5.300Q6.300 1.400 6.900 2.900H12.800Q14.100 2.900 14.100 4.300V4.500H1.400z" fill="#fbe08a"/><path d="M1.500 5Q1.500 3.800 2.700 3.800H12.900Q14.100 3.800 14.100 5V9.800Q14.100 11 12.900 11H2.700Q1.500 11 1.500 9.800z" fill="url(#fg)"/><path d="M1.500 5Q1.500 3.800 2.700 3.800H3.600V11H2.700Q1.500 11 1.500 9.800z" fill="#fff8d0" opacity=".7"/></svg>
<div class="t" style="left:112.17px;top:242px;width:47.15px;transform-origin:100% 50%;transform:scaleX(0.9530);">26,78 MB</div>
<div class="t" style="left:166px;top:242px;transform:scaleX(0.9391);">elateia - OCR</div>
<div class="a" style="left:48px;top:264px;width:9px;height:1px;background:repeating-linear-gradient(to right,#9a9a9a 0 1px,transparent 1px 2px)"></div>
<svg style="left:57px;top:258px" width="16" height="13" viewBox="0 0 16 13"><path d="M1 3.200Q1 1 3 1H6Q7.500 1 8.200 2.600H13.500Q15.500 2.600 15.500 4.600V10.800Q15.500 12.500 13.700 12.500H2.700Q1 12.500 1 10.800z" fill="#8a5c10"/><path d="M0.500 2.700Q0.500 0.500 2.500 0.500H5.500Q7 0.500 7.700 2.100H13Q15 2.100 15 4.100V10.200Q15 11.900 13.200 11.900H2.200Q0.500 11.900 0.500 10.200z" fill="#cf962a"/><path d="M1.400 2.800Q1.400 1.400 2.800 1.400H5.300Q6.300 1.400 6.900 2.900H12.800Q14.100 2.900 14.100 4.300V4.500H1.400z" fill="#fbe08a"/><path d="M1.500 5Q1.500 3.800 2.700 3.800H12.900Q14.100 3.800 14.100 5V9.800Q14.100 11 12.900 11H2.700Q1.500 11 1.500 9.800z" fill="url(#fg)"/><path d="M1.500 5Q1.500 3.800 2.700 3.800H3.600V11H2.700Q1.500 11 1.500 9.800z" fill="#fff8d0" opacity=".7"/></svg>
<div class="t" style="left:112.98px;top:258px;width:46.33px;transform-origin:100% 50%;transform:scaleX(0.9530);">11,65 MB</div>
<div class="t" style="left:166px;top:258px;transform:scaleX(0.9535);">foto karlis (E)</div>
<div class="a" style="left:42px;top:276px;width:9px;height:9px;border:1px solid #9C9C94;background:#fff"></div>
<div class="a" style="left:44px;top:280px;width:5px;height:1px;background:#000"></div>
<div class="a" style="left:46px;top:278px;width:1px;height:5px;background:#000"></div>
<div class="a" style="left:52px;top:280px;width:5px;height:1px;background:repeating-linear-gradient(to right,#9a9a9a 0 1px,transparent 1px 2px)"></div>
<svg style="left:57px;top:274px" width="16" height="13" viewBox="0 0 16 13"><path d="M1 3.200Q1 1 3 1H6Q7.500 1 8.200 2.600H13.500Q15.500 2.600 15.500 4.600V10.800Q15.500 12.500 13.700 12.500H2.700Q1 12.500 1 10.800z" fill="#8a5c10"/><path d="M0.500 2.700Q0.500 0.500 2.500 0.500H5.500Q7 0.500 7.700 2.100H13Q15 2.100 15 4.100V10.200Q15 11.900 13.200 11.900H2.200Q0.500 11.900 0.500 10.200z" fill="#cf962a"/><path d="M1.400 2.800Q1.400 1.400 2.800 1.400H5.300Q6.300 1.400 6.900 2.900H12.800Q14.100 2.900 14.100 4.300V4.500H1.400z" fill="#fbe08a"/><path d="M1.500 5Q1.500 3.800 2.700 3.800H12.900Q14.100 3.800 14.100 5V9.800Q14.100 11 12.900 11H2.700Q1.500 11 1.500 9.800z" fill="url(#fg)"/><path d="M1.500 5Q1.500 3.800 2.700 3.800H3.600V11H2.700Q1.500 11 1.500 9.800z" fill="#fff8d0" opacity=".7"/></svg>
<div class="t" style="left:112.17px;top:274px;width:47.15px;transform-origin:100% 50%;transform:scaleX(0.9530);">10,83 MB</div>
<div class="t" style="left:166px;top:274px;transform:scaleX(1.0188);">Αθλητικό πνεύμα</div>
<div class="a" style="left:42px;top:292px;width:9px;height:9px;border:1px solid #9C9C94;background:#fff"></div>
<div class="a" style="left:44px;top:296px;width:5px;height:1px;background:#000"></div>
<div class="a" style="left:46px;top:294px;width:1px;height:5px;background:#000"></div>
<div class="a" style="left:52px;top:296px;width:5px;height:1px;background:repeating-linear-gradient(to right,#9a9a9a 0 1px,transparent 1px 2px)"></div>
<svg style="left:57px;top:290px" width="16" height="13" viewBox="0 0 16 13"><path d="M1 3.200Q1 1 3 1H6Q7.500 1 8.200 2.600H13.500Q15.500 2.600 15.500 4.600V10.800Q15.500 12.500 13.700 12.500H2.700Q1 12.500 1 10.800z" fill="#8a5c10"/><path d="M0.500 2.700Q0.500 0.500 2.500 0.500H5.500Q7 0.500 7.700 2.100H13Q15 2.100 15 4.100V10.200Q15 11.900 13.200 11.900H2.200Q0.500 11.900 0.500 10.200z" fill="#cf962a"/><path d="M1.400 2.800Q1.400 1.400 2.800 1.400H5.300Q6.300 1.400 6.900 2.900H12.800Q14.100 2.900 14.100 4.300V4.500H1.400z" fill="#fbe08a"/><path d="M1.500 5Q1.500 3.800 2.700 3.800H12.900Q14.100 3.800 14.100 5V9.800Q14.100 11 12.900 11H2.700Q1.500 11 1.500 9.800z" fill="url(#fg)"/><path d="M1.500 5Q1.500 3.800 2.700 3.800H3.600V11H2.700Q1.500 11 1.500 9.800z" fill="#fff8d0" opacity=".7"/></svg>
<div class="t" style="left:118.29px;top:290px;width:41.02px;transform-origin:100% 50%;transform:scaleX(0.9530);">9,88 MB</div>
<div class="t" style="left:166px;top:290px;transform:scaleX(0.9525);">Site gymnasiou 5-12-2004</div>
<div class="a" style="left:42px;top:308px;width:9px;height:9px;border:1px solid #9C9C94;background:#fff"></div>
<div class="a" style="left:44px;top:312px;width:5px;height:1px;background:#000"></div>
<div class="a" style="left:46px;top:310px;width:1px;height:5px;background:#000"></div>
<div class="a" style="left:52px;top:312px;width:5px;height:1px;background:repeating-linear-gradient(to right,#9a9a9a 0 1px,transparent 1px 2px)"></div>
<svg style="left:57px;top:306px" width="16" height="13" viewBox="0 0 16 13"><path d="M1 3.200Q1 1 3 1H6Q7.500 1 8.200 2.600H13.500Q15.500 2.600 15.500 4.600V10.800Q15.500 12.500 13.700 12.500H2.700Q1 12.500 1 10.800z" fill="#8a5c10"/><path d="M0.500 2.700Q0.500 0.500 2.500 0.500H5.500Q7 0.500 7.700 2.100H13Q15 2.100 15 4.100V10.200Q15 11.900 13.200 11.900H2.200Q0.500 11.900 0.500 10.200z" fill="#cf962a"/><path d="M1.400 2.800Q1.400 1.400 2.800 1.400H5.300Q6.300 1.400 6.900 2.900H12.800Q14.100 2.900 14.100 4.300V4.500H1.400z" fill="#fbe08a"/><path d="M1.500 5Q1.500 3.800 2.700 3.800H12.900Q14.100 3.800 14.100 5V9.800Q14.100 11 12.900 11H2.700Q1.500 11 1.500 9.800z" fill="url(#fg)"/><path d="M1.500 5Q1.500 3.800 2.700 3.800H3.600V11H2.700Q1.500 11 1.500 9.800z" fill="#fff8d0" opacity=".7"/></svg>
<div class="t" style="left:118.29px;top:306px;width:41.02px;transform-origin:100% 50%;transform:scaleX(0.9530);">6,72 MB</div>
<div class="t" style="left:166px;top:306px;transform:scaleX(0.9779);">Iti-Do</div>
<div class="a" style="left:48px;top:328px;width:9px;height:1px;background:repeating-linear-gradient(to right,#9a9a9a 0 1px,transparent 1px 2px)"></div>
<svg style="left:57px;top:322px" width="16" height="13" viewBox="0 0 16 13"><path d="M1 3.200Q1 1 3 1H6Q7.500 1 8.200 2.600H13.500Q15.500 2.600 15.500 4.600V10.800Q15.500 12.500 13.700 12.500H2.700Q1 12.500 1 10.800z" fill="#8a5c10"/><path d="M0.500 2.700Q0.500 0.500 2.500 0.500H5.500Q7 0.500 7.700 2.100H13Q15 2.100 15 4.100V10.200Q15 11.900 13.200 11.900H2.200Q0.500 11.900 0.500 10.200z" fill="#cf962a"/><path d="M1.400 2.800Q1.400 1.400 2.800 1.400H5.300Q6.300 1.400 6.900 2.900H12.800Q14.100 2.900 14.100 4.300V4.500H1.400z" fill="#fbe08a"/><path d="M1.500 5Q1.500 3.800 2.700 3.800H12.900Q14.100 3.800 14.100 5V9.800Q14.100 11 12.900 11H2.700Q1.500 11 1.500 9.800z" fill="url(#fg)"/><path d="M1.500 5Q1.500 3.800 2.700 3.800H3.600V11H2.700Q1.500 11 1.500 9.800z" fill="#fff8d0" opacity=".7"/></svg>
<div class="t" style="left:118.29px;top:322px;width:41.02px;transform-origin:100% 50%;transform:scaleX(0.9530);">2,51 MB</div>
<div class="t" style="left:166px;top:322px;transform:scaleX(0.9639);">thesaurus</div>
<div class="a" style="left:48px;top:344px;width:9px;height:1px;background:repeating-linear-gradient(to right,#9a9a9a 0 1px,transparent 1px 2px)"></div>
<svg style="left:57px;top:338px" width="16" height="13" viewBox="0 0 16 13"><path d="M1 3.200Q1 1 3 1H6Q7.500 1 8.200 2.600H13.500Q15.500 2.600 15.500 4.600V10.800Q15.500 12.500 13.700 12.500H2.700Q1 12.500 1 10.800z" fill="#8a5c10"/><path d="M0.500 2.700Q0.500 0.500 2.500 0.500H5.500Q7 0.500 7.700 2.100H13Q15 2.100 15 4.100V10.200Q15 11.900 13.200 11.900H2.200Q0.500 11.900 0.500 10.200z" fill="#cf962a"/><path d="M1.400 2.800Q1.400 1.400 2.800 1.400H5.300Q6.300 1.400 6.900 2.900H12.800Q14.100 2.900 14.100 4.300V4.500H1.400z" fill="#fbe08a"/><path d="M1.500 5Q1.500 3.800 2.700 3.800H12.900Q14.100 3.800 14.100 5V9.800Q14.100 11 12.900 11H2.700Q1.500 11 1.500 9.800z" fill="url(#fg)"/><path d="M1.500 5Q1.500 3.800 2.700 3.800H3.600V11H2.700Q1.500 11 1.500 9.800z" fill="#fff8d0" opacity=".7"/></svg>
<div class="t" style="left:118.29px;top:338px;width:41.02px;transform-origin:100% 50%;transform:scaleX(0.9530);">2,07 MB</div>
<div class="t" style="left:166px;top:338px;transform:scaleX(0.9874);">ΓΛΩΣΣΙΚΑ</div>
<div class="a" style="left:48px;top:360px;width:9px;height:1px;background:repeating-linear-gradient(to right,#9a9a9a 0 1px,transparent 1px 2px)"></div>
<svg style="left:57px;top:354px" width="16" height="13" viewBox="0 0 16 13"><path d="M1 3.200Q1 1 3 1H6Q7.500 1 8.200 2.600H13.500Q15.500 2.600 15.500 4.600V10.800Q15.500 12.500 13.700 12.500H2.700Q1 12.500 1 10.800z" fill="#8a5c10"/><path d="M0.500 2.700Q0.500 0.500 2.500 0.500H5.500Q7 0.500 7.700 2.100H13Q15 2.100 15 4.100V10.200Q15 11.900 13.200 11.900H2.200Q0.500 11.900 0.500 10.200z" fill="#cf962a"/><path d="M1.400 2.800Q1.400 1.400 2.800 1.400H5.300Q6.300 1.400 6.900 2.900H12.800Q14.100 2.900 14.100 4.300V4.500H1.400z" fill="#fbe08a"/><path d="M1.500 5Q1.500 3.800 2.700 3.800H12.900Q14.100 3.800 14.100 5V9.800Q14.100 11 12.900 11H2.700Q1.500 11 1.500 9.800z" fill="url(#fg)"/><path d="M1.500 5Q1.500 3.800 2.700 3.800H3.600V11H2.700Q1.500 11 1.500 9.800z" fill="#fff8d0" opacity=".7"/></svg>
<div class="t" style="left:118.29px;top:354px;width:41.02px;transform-origin:100% 50%;transform:scaleX(0.9530);">1,86 MB</div>
<div class="t" style="left:166px;top:354px;transform:scaleX(0.9515);">Antiquarium2</div>
<div class="a" style="left:48px;top:376px;width:9px;height:1px;background:repeating-linear-gradient(to right,#9a9a9a 0 1px,transparent 1px 2px)"></div>
<svg style="left:57px;top:370px" width="16" height="13" viewBox="0 0 16 13"><path d="M1 3.200Q1 1 3 1H6Q7.500 1 8.200 2.600H13.500Q15.500 2.600 15.500 4.600V10.800Q15.500 12.500 13.700 12.500H2.700Q1 12.500 1 10.800z" fill="#8a5c10"/><path d="M0.500 2.700Q0.500 0.500 2.500 0.500H5.500Q7 0.500 7.700 2.100H13Q15 2.100 15 4.100V10.200Q15 11.900 13.200 11.900H2.200Q0.500 11.900 0.500 10.200z" fill="#cf962a"/><path d="M1.400 2.800Q1.400 1.400 2.800 1.400H5.300Q6.300 1.400 6.900 2.900H12.800Q14.100 2.900 14.100 4.300V4.500H1.400z" fill="#fbe08a"/><path d="M1.500 5Q1.500 3.800 2.700 3.800H12.900Q14.100 3.800 14.100 5V9.800Q14.100 11 12.900 11H2.700Q1.500 11 1.500 9.800z" fill="url(#fg)"/><path d="M1.500 5Q1.500 3.800 2.700 3.800H3.600V11H2.700Q1.500 11 1.500 9.800z" fill="#fff8d0" opacity=".7"/></svg>
<div class="t" style="left:118.29px;top:370px;width:41.02px;transform-origin:100% 50%;transform:scaleX(0.9530);">1,54 MB</div>
<div class="t" style="left:166px;top:370px;transform:scaleX(0.9571);">protomagia</div>
<div class="a" style="left:42px;top:388px;width:9px;height:9px;border:1px solid #9C9C94;background:#fff"></div>
<div class="a" style="left:44px;top:392px;width:5px;height:1px;background:#000"></div>
<div class="a" style="left:46px;top:390px;width:1px;height:5px;background:#000"></div>
<div class="a" style="left:52px;top:392px;width:5px;height:1px;background:repeating-linear-gradient(to right,#9a9a9a 0 1px,transparent 1px 2px)"></div>
<svg style="left:57px;top:386px" width="16" height="13" viewBox="0 0 16 13"><path d="M1 3.200Q1 1 3 1H6Q7.500 1 8.200 2.600H13.500Q15.500 2.600 15.500 4.600V10.800Q15.500 12.500 13.700 12.500H2.700Q1 12.500 1 10.800z" fill="#8a5c10"/><path d="M0.500 2.700Q0.500 0.500 2.500 0.500H5.500Q7 0.500 7.700 2.100H13Q15 2.100 15 4.100V10.200Q15 11.900 13.200 11.900H2.200Q0.500 11.900 0.500 10.200z" fill="#cf962a"/><path d="M1.400 2.800Q1.400 1.400 2.800 1.400H5.300Q6.300 1.400 6.900 2.900H12.800Q14.100 2.900 14.100 4.300V4.500H1.400z" fill="#fbe08a"/><path d="M1.500 5Q1.500 3.800 2.700 3.800H12.900Q14.100 3.800 14.100 5V9.800Q14.100 11 12.900 11H2.700Q1.500 11 1.500 9.800z" fill="url(#fg)"/><path d="M1.500 5Q1.500 3.800 2.700 3.800H3.600V11H2.700Q1.500 11 1.500 9.800z" fill="#fff8d0" opacity=".7"/></svg>
<div class="t" style="left:118.29px;top:386px;width:41.02px;transform-origin:100% 50%;transform:scaleX(0.9530);">1,14 MB</div>
<div class="t" style="left:166px;top:386px;transform:scaleX(1.0391);">IPA</div>
<div class="a" style="left:48px;top:408px;width:9px;height:1px;background:repeating-linear-gradient(to right,#9a9a9a 0 1px,transparent 1px 2px)"></div>
<svg style="left:57px;top:402px" width="16" height="13" viewBox="0 0 16 13"><path d="M1 3.200Q1 1 3 1H6Q7.500 1 8.200 2.600H13.500Q15.500 2.600 15.500 4.600V10.800Q15.500 12.500 13.700 12.500H2.700Q1 12.500 1 10.800z" fill="#8a5c10"/><path d="M0.500 2.700Q0.500 0.500 2.500 0.500H5.500Q7 0.500 7.700 2.100H13Q15 2.100 15 4.100V10.200Q15 11.900 13.200 11.900H2.200Q0.500 11.900 0.500 10.200z" fill="#cf962a"/><path d="M1.400 2.800Q1.400 1.400 2.800 1.400H5.300Q6.300 1.400 6.900 2.900H12.800Q14.100 2.900 14.100 4.300V4.500H1.400z" fill="#fbe08a"/><path d="M1.500 5Q1.500 3.800 2.700 3.800H12.900Q14.100 3.800 14.100 5V9.800Q14.100 11 12.900 11H2.700Q1.500 11 1.500 9.800z" fill="url(#fg)"/><path d="M1.500 5Q1.500 3.800 2.700 3.800H3.600V11H2.700Q1.500 11 1.500 9.800z" fill="#fff8d0" opacity=".7"/></svg>
<div class="t" style="left:118.29px;top:402px;width:41.02px;transform-origin:100% 50%;transform:scaleX(0.9530);">1,14 MB</div>
<div class="t" style="left:166px;top:402px;transform:scaleX(0.9723);">ISTOSELIDA PERIODIKO</div>
</div>
<div class="a" style="left:310px;top:130px;width:16px;height:417px;background:linear-gradient(to right,#F3F1EC,#FEFEFB)"></div>
<div class="a" style="left:6px;top:547px;width:304px;height:17px;background:linear-gradient(to bottom,#F3F1EC,#FEFEFB)"></div>
<div class="a" style="left:310px;top:547px;width:16px;height:17px;background:#ECE9D8"></div>
<div class="a" style="left:310px;top:130px;width:16px;height:16px;background:linear-gradient(to right,#C9D8FC,#B7CBF9);border:1px solid #fff;border-radius:3px;box-shadow:inset -1px -1px 0 #9FB5F0"></div>
<svg style="left:313px;top:134px" width="9" height="9" viewBox="0 0 9 9"><path d="M1 5.500L4.500 2L8 5.500" stroke="#4D6185" stroke-width="2" fill="none"/></svg>
<div class="a" style="left:310px;top:530px;width:16px;height:16px;background:linear-gradient(to right,#C9D8FC,#B7CBF9);border:1px solid #fff;border-radius:3px;box-shadow:inset -1px -1px 0 #9FB5F0"></div>
<svg style="left:313px;top:534px" width="9" height="9" viewBox="0 0 9 9"><path d="M1 2L4.500 5.500L8 2" stroke="#4D6185" stroke-width="2" fill="none"/></svg>
<div class="a" style="left:310px;top:147px;width:16px;height:262px;background:linear-gradient(to right,#C9D8FC,#B7CBF9);border:1px solid #fff;border-radius:3px;box-shadow:inset -1px -1px 0 #9FB5F0"></div>
<div class="a" style="left:315px;top:274px;width:6px;height:8px;background:repeating-linear-gradient(to bottom,#EEF4FE 0 1px,#8CB0F8 1px 2px)"></div>
<div class="a" style="left:6px;top:548px;width:16px;height:16px;background:linear-gradient(to bottom,#C9D8FC,#B7CBF9);border:1px solid #fff;border-radius:3px;box-shadow:inset -1px -1px 0 #9FB5F0"></div>
<svg style="left:9px;top:551px" width="9" height="9" viewBox="0 0 9 9"><path d="M5.500 1L2 4.500L5.500 8" stroke="#4D6185" stroke-width="2" fill="none"/></svg>
<div class="a" style="left:292px;top:548px;width:16px;height:16px;background:linear-gradient(to bottom,#C9D8FC,#B7CBF9);border:1px solid #fff;border-radius:3px;box-shadow:inset -1px -1px 0 #9FB5F0"></div>
<svg style="left:296px;top:551px" width="9" height="9" viewBox="0 0 9 9"><path d="M2 1L5.500 4.500L2 8" stroke="#4D6185" stroke-width="2" fill="none"/></svg>
<div class="a" style="left:23px;top:548px;width:228px;height:16px;background:linear-gradient(to bottom,#C9D8FC,#B7CBF9);border:1px solid #fff;border-radius:3px;box-shadow:inset -1px -1px 0 #9FB5F0"></div>
<div class="a" style="left:133px;top:553px;width:8px;height:6px;background:repeating-linear-gradient(to right,#EEF4FE 0 1px,#8CB0F8 1px 2px)"></div>
<div class="hdr" style="left:333px;top:81px;width:631px;height:20px"></div>
<div class="t" style="font-size:12px;line-height:14px;height:14px;font-weight:bold;color:#DEE7FB;left:338.5px;top:85px;transform:scaleX(0.9677);-webkit-text-stroke:.4px;">Bars graph</div>
<div class="a" style="left:333px;top:101px;width:632px;height:1px;background:#ECE9D8"></div>
<div class="a" style="left:333px;top:102px;width:632px;height:1px;background:#fff"></div>
<div class="a" style="left:333px;top:102px;width:1px;height:25px;background:#fff"></div>
<div class="a" style="left:333px;top:126px;width:632px;height:1px;background:#ACA899"></div>
<div class="a" style="left:333px;top:127px;width:632px;height:1px;background:#fff"></div>
<div class="a" style="left:963px;top:102px;width:1px;height:25px;background:#ACA899"></div>
<div class="grip" style="left:337px;top:105px"></div>
<div class="grip" style="left:421px;top:105px"></div>
<div class="grip" style="left:528px;top:105px"></div>
<div class="grip" style="left:611px;top:105px"></div>
<div class="vsep" style="left:417px;top:103px;height:23px"></div>
<div class="vsep" style="left:524px;top:103px;height:23px"></div>
<div class="vsep" style="left:607px;top:103px;height:23px"></div>
<div class="pressed" style="left:344px;top:104px;width:23px;height:22px"></div>
<div class="pressed" style="left:367px;top:104px;width:23px;height:22px"></div>
<div class="pressed" style="left:429px;top:104px;width:23px;height:22px"></div>
<div class="pressed" style="left:452px;top:104px;width:23px;height:22px"></div>
<div class="pressed" style="left:474px;top:104px;width:23px;height:22px"></div>
<svg style="left:349px;top:108px" width="15" height="15" viewBox="0 0 15 15" ><path d="M1.500 0V13.500H15" stroke="#000" stroke-width="1" fill="none" shape-rendering="crispEdges"/><path d="M2 13L13.500 7.500" stroke="#000" stroke-width="1.100"/></svg>
<div class="a" style="left:371px;top:107px;width:16px;height:16px;background:linear-gradient(to bottom,#3cb84a,#0a7a1a)"></div>
<div class="a" style="left:394px;top:107px;width:15px;height:16px;background:linear-gradient(to right,#f01010 0 5px,#10d020 5px 10px,#1020e0 10px 15px)"></div>
<svg style="left:434px;top:112px" width="15" height="9" viewBox="0 0 15 9" ><path d="M0.5 0v9M13.5 0v9M1 4.5h12" stroke="#000" stroke-width="1" fill="none"/><path d="M1.5 4.5L5 1.2M1.5 4.5L5 7.8M12.5 4.5L9 1.2M12.5 4.5L9 7.8" stroke="#000" stroke-width="1.3" fill="none"/></svg>
<svg style="left:456px;top:112px" width="15" height="9" viewBox="0 0 15 9" ><path d="M2 0.5h12.5v6l-2 2H0.5V2z" fill="#b9b9b9"/><path d="M2 0.5h12.5" stroke="#7a7a7a"/><path d="M14 0.5v6l-2 2H1v-1.5h10.5l1.5-1.5z" fill="#111"/><rect x="1.5" y="2" width="10.5" height="5" fill="#c9c9c9"/><rect x="1.5" y="2" width="10.5" height="1" fill="#e6e6e6"/><rect x="3.5" y="4.6" width="4.5" height="1.2" fill="#111"/><rect x="3.5" y="5.8" width="5" height="0.8" fill="#fff"/><rect x="10" y="3" width="1" height="1" fill="#7a3a3a"/></svg>
<svg style="left:478px;top:107px" width="16" height="16" viewBox="0 0 16 16" ><rect x="6.5" y="1" width="8.5" height="10.5" rx="2" fill="#d8ecfb" stroke="#2c6fc0" stroke-width="1.6"/><path d="M8 14.8h7.5" stroke="#2a64b0" stroke-width="1.4"/><path d="M11 12v3" stroke="#3a86d6" stroke-width="1.6"/><path d="M0.5 2.2q0-1 1-1h2.2q1 0 1 1v0.4h6.3v8.4h-10.5z" fill="#f4c23a" stroke="#d98a1a" stroke-width="1"/><rect x="2" y="3.6" width="8.5" height="6.6" fill="#f6e25a"/><rect x="2" y="3.6" width="2" height="6.6" fill="#fdf6c8"/><rect x="0.6" y="1.2" width="3.6" height="1.6" fill="#e8831c"/></svg>
<svg style="left:500px;top:106px" width="15" height="16" viewBox="0 0 15 16" ><path d="M1 3.5L3.5 1h9L14.5 3v9.5L11 15.5H3.5L1 13z" fill="#e9edf9" stroke="#8c8c94" stroke-width="1"/><path d="M2.5 3q2-2.4 6-1.6L6.5 4.6Q4 4.6 2.5 3z" fill="#1a1ab8"/><path d="M13.5 3.5v9" stroke="#14148c" stroke-width="1.6"/><path d="M2.2 5v8" stroke="#c8c8d0" stroke-width="1.2" stroke-dasharray="1 1"/><path d="M7 7.5q2-2 4.2-0.6l1-1v3.4H8.8l1.1-1.1q-1.2-.8-2.2.3z" fill="#1c2ccc"/><path d="M11.6 11q-2 2-4.2.6l-1 1V9.2h3.4l-1.1 1.1q1.2.8 2.2-.3z" fill="#14148c"/><path d="M7.4 9h3" stroke="#58b8f0" stroke-width="1.2"/></svg>
<svg style="left:538px;top:107px" width="16" height="15" viewBox="0 0 16 15" ><g shape-rendering="crispEdges"><path d="M0.500 0.500h6l2 2v7h-8z" fill="#fff" stroke="#000080"/><path d="M2 3.500h4M2 5.500h5M2 7.500h5" stroke="#000080"/><path d="M6.500 4.500h6l2 2v7h-8z" fill="#fff" stroke="#000080"/><path d="M8 7.500h4M8 9.500h5M8 11.500h5" stroke="#000080"/></g></svg>
<svg style="left:562px;top:107px" width="15" height="15" viewBox="0 0 15 15" ><path d="M0.500 0.500h14v14h-13l-1-1z" fill="#6a6a20" stroke="#000" stroke-width="1"/><rect x="3" y="1" width="9" height="6" fill="#fff"/><rect x="3.500" y="9.500" width="8" height="5" fill="#222"/><rect x="5" y="10.500" width="2" height="3" fill="#c8c8c8"/></svg>
<svg style="left:584px;top:107px" width="17" height="15" viewBox="0 0 17 15" ><path d="M4.500 0.500h8l-1.500 5h-8z" fill="#fff" stroke="#000" stroke-width="1"/><path d="M0.500 7.500l2.500-2.500h11.500l1.500 2.500v4l-2 2.500h-13.500z" fill="#c8c8c0" stroke="#000" stroke-width="1"/><path d="M1 8.500h13l2-1" stroke="#000" fill="none"/><path d="M3 11.500h8" stroke="#e8e040" stroke-width="1.500"/><path d="M5.500 2.500h5M5 4h5" stroke="#888" stroke-width=".8"/></svg>
<svg style="left:623px;top:107px" width="16" height="16" viewBox="0 0 16 16" ><circle cx="6" cy="6" r="5" fill="#fff" stroke="#000" stroke-width="1.300"/><path d="M9.800 9.800L15 15" stroke="#000" stroke-width="2.400"/><path d="M3.500 6h5" stroke="#000" stroke-width="1.800"/><path d="M6 3.500v5" stroke="#000" stroke-width="1.800"/></svg>
<svg style="left:712px;top:107px" width="16" height="16" viewBox="0 0 16 16" ><circle cx="6" cy="6" r="5" fill="#fff" stroke="#000" stroke-width="1.300"/><path d="M9.800 9.800L15 15" stroke="#000" stroke-width="2.400"/><path d="M3.500 6h5" stroke="#000" stroke-width="1.800"/></svg>
<div class="a" style="left:643px;top:105px;width:63px;height:18px;border:1px solid;border-color:#716F64 #F1EFE2 #F1EFE2 #716F64;background:#fff"></div>
<div class="a" style="left:642px;top:104px;width:65px;height:20px;border:1px solid;border-color:#ACA899 #fff #fff #ACA899"></div>
<div class="a" style="left:689px;top:106px;width:16px;height:16px;background:#ECE9D8;border:1px solid;border-color:#fff #716F64 #716F64 #fff;box-shadow:inset -1px -1px 0 #ACA899"></div>
<svg style="left:693px;top:112px" width="8" height="4" viewBox="0 0 8 4"><path d="M0.500 0h7L4 4z" fill="#000"/></svg>
<div class="t" style="left:646px;top:108.5px;transform:scaleX(0.9412);">100%</div>
<div class="a" style="left:333px;top:128px;width:632px;height:438px;border:1px solid;border-color:#ACA899 #fff #fff #ACA899"></div>
<div class="a" style="left:334px;top:129px;width:630px;height:436px;border:1px solid;border-color:#716F64 #F1EFE2 #F1EFE2 #716F64"></div>
<div class="a" style="left:335px;top:130px;width:611px;height:434px;background:linear-gradient(to bottom,#C0C0C0,#008080)"></div>
<svg style="left:0;top:0" width="969" height="689" viewBox="0 0 969 689" shape-rendering="crispEdges"><path d="M667.5 169V468" stroke="rgba(128,128,128,.65)" stroke-width="1" stroke-dasharray="3 3" fill="none"/><path d="M667.5 469L659.5 477" stroke="rgba(128,128,128,.65)" stroke-width="1" stroke-dasharray="2 2" fill="none"/><path d="M770.5 169V468" stroke="rgba(128,128,128,.65)" stroke-width="1" stroke-dasharray="3 3" fill="none"/><path d="M770.5 469L762.5 477" stroke="rgba(128,128,128,.65)" stroke-width="1" stroke-dasharray="2 2" fill="none"/><path d="M873.5 169V468" stroke="rgba(128,128,128,.65)" stroke-width="1" stroke-dasharray="3 3" fill="none"/><path d="M873.5 469L865.5 477" stroke="rgba(128,128,128,.65)" stroke-width="1" stroke-dasharray="2 2" fill="none"/><path d="M564 185.5H926" stroke="rgba(128,128,128,.65)" stroke-width="1" stroke-dasharray="3 3" fill="none"/><path d="M564 213.5H926" stroke="rgba(128,128,128,.65)" stroke-width="1" stroke-dasharray="3 3" fill="none"/><path d="M564 242.5H926" stroke="rgba(128,128,128,.65)" stroke-width="1" stroke-dasharray="3 3" fill="none"/><path d="M564 270.5H926" stroke="rgba(128,128,128,.65)" stroke-width="1" stroke-dasharray="3 3" fill="none"/><path d="M564 298.5H926" stroke="rgba(128,128,128,.65)" stroke-width="1" stroke-dasharray="3 3" fill="none"/><path d="M564 326.5H926" stroke="rgba(128,128,128,.65)" stroke-width="1" stroke-dasharray="3 3" fill="none"/><path d="M564 355.5H926" stroke="rgba(128,128,128,.65)" stroke-width="1" stroke-dasharray="3 3" fill="none"/><path d="M564 383.5H926" stroke="rgba(128,128,128,.65)" stroke-width="1" stroke-dasharray="3 3" fill="none"/><path d="M564 411.5H926" stroke="rgba(128,128,128,.65)" stroke-width="1" stroke-dasharray="3 3" fill="none"/><path d="M564 440.5H926" stroke="rgba(128,128,128,.65)" stroke-width="1" stroke-dasharray="3 3" fill="none"/><path d="M564 468.5H926" stroke="rgba(128,128,128,.65)" stroke-width="1" stroke-dasharray="3 3" fill="none"/><clipPath id="cb"><rect x="540" y="130" width="385" height="346"/></clipPath><g clip-path="url(#cb)"><polygon points="561.5,178.5 922.5,178.5 925.5,175.5 564.5,175.5" fill="#E2D22E" stroke="#000" stroke-width="1"/><polygon points="922.5,178.5 925.5,175.5 925.5,196.5 922.5,199.5" fill="#B4A638" stroke="#000" stroke-width="1"/><rect x="561.5" y="178.5" width="361" height="21" fill="#F4EE50" stroke="#000" stroke-width="1"/><polygon points="558.5,183.5 919.5,183.5 922.5,180.5 561.5,180.5" fill="#004000" stroke="#000" stroke-width="1"/><polygon points="919.5,183.5 922.5,180.5 922.5,197.5 919.5,200.5" fill="#001800" stroke="#000" stroke-width="1"/><rect x="558.5" y="183.5" width="361" height="17" fill="#008000" stroke="#000" stroke-width="1"/><polygon points="561.5,206.5 730.5,206.5 733.5,203.5 564.5,203.5" fill="#E2D22E" stroke="#000" stroke-width="1"/><polygon points="730.5,206.5 733.5,203.5 733.5,224.5 730.5,227.5" fill="#B4A638" stroke="#000" stroke-width="1"/><rect x="561.5" y="206.5" width="169" height="21" fill="#F4EE50" stroke="#000" stroke-width="1"/><polygon points="558.5,211.5 727.5,211.5 730.5,208.5 561.5,208.5" fill="#004000" stroke="#000" stroke-width="1"/><polygon points="727.5,211.5 730.5,208.5 730.5,225.5 727.5,228.5" fill="#001800" stroke="#000" stroke-width="1"/><rect x="558.5" y="211.5" width="169" height="17" fill="#008000" stroke="#000" stroke-width="1"/><polygon points="561.5,235.5 688.5,235.5 691.5,232.5 564.5,232.5" fill="#E2D22E" stroke="#000" stroke-width="1"/><polygon points="688.5,235.5 691.5,232.5 691.5,253.5 688.5,256.5" fill="#B4A638" stroke="#000" stroke-width="1"/><rect x="561.5" y="235.5" width="127" height="21" fill="#F4EE50" stroke="#000" stroke-width="1"/><polygon points="558.5,240.5 685.5,240.5 688.5,237.5 561.5,237.5" fill="#004000" stroke="#000" stroke-width="1"/><polygon points="685.5,240.5 688.5,237.5 688.5,254.5 685.5,257.5" fill="#001800" stroke="#000" stroke-width="1"/><rect x="558.5" y="240.5" width="127" height="17" fill="#008000" stroke="#000" stroke-width="1"/><polygon points="561.5,263.5 649.5,263.5 652.5,260.5 564.5,260.5" fill="#E2D22E" stroke="#000" stroke-width="1"/><polygon points="649.5,263.5 652.5,260.5 652.5,281.5 649.5,284.5" fill="#B4A638" stroke="#000" stroke-width="1"/><rect x="561.5" y="263.5" width="88" height="21" fill="#F4EE50" stroke="#000" stroke-width="1"/><polygon points="558.5,268.5 646.5,268.5 649.5,265.5 561.5,265.5" fill="#004000" stroke="#000" stroke-width="1"/><polygon points="646.5,268.5 649.5,265.5 649.5,282.5 646.5,285.5" fill="#001800" stroke="#000" stroke-width="1"/><rect x="558.5" y="268.5" width="88" height="17" fill="#008000" stroke="#000" stroke-width="1"/><polygon points="561.5,291.5 628.5,291.5 631.5,288.5 564.5,288.5" fill="#E2D22E" stroke="#000" stroke-width="1"/><polygon points="628.5,291.5 631.5,288.5 631.5,309.5 628.5,312.5" fill="#B4A638" stroke="#000" stroke-width="1"/><rect x="561.5" y="291.5" width="67" height="21" fill="#F4EE50" stroke="#000" stroke-width="1"/><polygon points="558.5,296.5 625.5,296.5 628.5,293.5 561.5,293.5" fill="#004000" stroke="#000" stroke-width="1"/><polygon points="625.5,296.5 628.5,293.5 628.5,310.5 625.5,313.5" fill="#001800" stroke="#000" stroke-width="1"/><rect x="558.5" y="296.5" width="67" height="17" fill="#008000" stroke="#000" stroke-width="1"/><polygon points="561.5,319.5 615.5,319.5 618.5,316.5 564.5,316.5" fill="#E2D22E" stroke="#000" stroke-width="1"/><polygon points="615.5,319.5 618.5,316.5 618.5,337.5 615.5,340.5" fill="#B4A638" stroke="#000" stroke-width="1"/><rect x="561.5" y="319.5" width="54" height="21" fill="#F4EE50" stroke="#000" stroke-width="1"/><polygon points="558.5,324.5 612.5,324.5 615.5,321.5 561.5,321.5" fill="#004000" stroke="#000" stroke-width="1"/><polygon points="612.5,324.5 615.5,321.5 615.5,338.5 612.5,341.5" fill="#001800" stroke="#000" stroke-width="1"/><rect x="558.5" y="324.5" width="54" height="17" fill="#008000" stroke="#000" stroke-width="1"/><polygon points="561.5,348.5 613.5,348.5 616.5,345.5 564.5,345.5" fill="#E2D22E" stroke="#000" stroke-width="1"/><polygon points="613.5,348.5 616.5,345.5 616.5,366.5 613.5,369.5" fill="#B4A638" stroke="#000" stroke-width="1"/><rect x="561.5" y="348.5" width="52" height="21" fill="#F4EE50" stroke="#000" stroke-width="1"/><polygon points="558.5,353.5 610.5,353.5 613.5,350.5 561.5,350.5" fill="#004000" stroke="#000" stroke-width="1"/><polygon points="610.5,353.5 613.5,350.5 613.5,367.5 610.5,370.5" fill="#001800" stroke="#000" stroke-width="1"/><rect x="558.5" y="353.5" width="52" height="17" fill="#008000" stroke="#000" stroke-width="1"/><polygon points="561.5,376.5 604.5,376.5 607.5,373.5 564.5,373.5" fill="#E2D22E" stroke="#000" stroke-width="1"/><polygon points="604.5,376.5 607.5,373.5 607.5,394.5 604.5,397.5" fill="#B4A638" stroke="#000" stroke-width="1"/><rect x="561.5" y="376.5" width="43" height="21" fill="#F4EE50" stroke="#000" stroke-width="1"/><polygon points="558.5,381.5 601.5,381.5 604.5,378.5 561.5,378.5" fill="#004000" stroke="#000" stroke-width="1"/><polygon points="601.5,381.5 604.5,378.5 604.5,395.5 601.5,398.5" fill="#001800" stroke="#000" stroke-width="1"/><rect x="558.5" y="381.5" width="43" height="17" fill="#008000" stroke="#000" stroke-width="1"/><polygon points="561.5,404.5 578.5,404.5 581.5,401.5 564.5,401.5" fill="#E2D22E" stroke="#000" stroke-width="1"/><polygon points="578.5,404.5 581.5,401.5 581.5,422.5 578.5,425.5" fill="#B4A638" stroke="#000" stroke-width="1"/><rect x="561.5" y="404.5" width="17" height="21" fill="#F4EE50" stroke="#000" stroke-width="1"/><polygon points="558.5,409.5 575.5,409.5 578.5,406.5 561.5,406.5" fill="#004000" stroke="#000" stroke-width="1"/><polygon points="575.5,409.5 578.5,406.5 578.5,423.5 575.5,426.5" fill="#001800" stroke="#000" stroke-width="1"/><rect x="558.5" y="409.5" width="17" height="17" fill="#008000" stroke="#000" stroke-width="1"/><polygon points="561.5,433.5 575.5,433.5 578.5,430.5 564.5,430.5" fill="#E2D22E" stroke="#000" stroke-width="1"/><polygon points="575.5,433.5 578.5,430.5 578.5,451.5 575.5,454.5" fill="#B4A638" stroke="#000" stroke-width="1"/><rect x="561.5" y="433.5" width="14" height="21" fill="#F4EE50" stroke="#000" stroke-width="1"/><polygon points="558.5,438.5 572.5,438.5 575.5,435.5 561.5,435.5" fill="#004000" stroke="#000" stroke-width="1"/><polygon points="572.5,438.5 575.5,435.5 575.5,452.5 572.5,455.5" fill="#001800" stroke="#000" stroke-width="1"/><rect x="558.5" y="438.5" width="14" height="17" fill="#008000" stroke="#000" stroke-width="1"/><polygon points="561.5,461.5 572.5,461.5 575.5,458.5 564.5,458.5" fill="#E2D22E" stroke="#000" stroke-width="1"/><polygon points="572.5,461.5 575.5,458.5 575.5,479.5 572.5,482.5" fill="#B4A638" stroke="#000" stroke-width="1"/><rect x="561.5" y="461.5" width="11" height="21" fill="#F4EE50" stroke="#000" stroke-width="1"/><polygon points="558.5,466.5 569.5,466.5 572.5,463.5 561.5,463.5" fill="#004000" stroke="#000" stroke-width="1"/><polygon points="569.5,466.5 572.5,463.5 572.5,480.5 569.5,483.5" fill="#001800" stroke="#000" stroke-width="1"/><rect x="558.5" y="466.5" width="11" height="17" fill="#008000" stroke="#000" stroke-width="1"/></g><rect x="554" y="195" width="2" height="283" fill="#000"/><rect x="554" y="476" width="364" height="2" fill="#000"/><rect x="551" y="194" width="3" height="1" fill="#808080"/><rect x="552" y="208" width="2" height="1" fill="#808080"/><rect x="551" y="222" width="3" height="1" fill="#808080"/><rect x="552" y="236" width="2" height="1" fill="#808080"/><rect x="551" y="251" width="3" height="1" fill="#808080"/><rect x="552" y="265" width="2" height="1" fill="#808080"/><rect x="551" y="279" width="3" height="1" fill="#808080"/><rect x="552" y="293" width="2" height="1" fill="#808080"/><rect x="551" y="307" width="3" height="1" fill="#808080"/><rect x="552" y="321" width="2" height="1" fill="#808080"/><rect x="551" y="335" width="3" height="1" fill="#808080"/><rect x="552" y="349" width="2" height="1" fill="#808080"/><rect x="551" y="364" width="3" height="1" fill="#808080"/><rect x="552" y="378" width="2" height="1" fill="#808080"/><rect x="551" y="392" width="3" height="1" fill="#808080"/><rect x="552" y="406" width="2" height="1" fill="#808080"/><rect x="551" y="420" width="3" height="1" fill="#808080"/><rect x="552" y="434" width="2" height="1" fill="#808080"/><rect x="551" y="449" width="3" height="1" fill="#808080"/><rect x="552" y="463" width="2" height="1" fill="#808080"/><rect x="551" y="477" width="3" height="1" fill="#808080"/><rect x="555" y="478" width="1" height="4" fill="#808080"/><rect x="581" y="478" width="1" height="2" fill="#808080"/><rect x="607" y="478" width="1" height="2" fill="#808080"/><rect x="632" y="478" width="1" height="2" fill="#808080"/><rect x="658" y="478" width="1" height="4" fill="#808080"/><rect x="684" y="478" width="1" height="2" fill="#808080"/><rect x="709" y="478" width="1" height="2" fill="#808080"/><rect x="735" y="478" width="1" height="2" fill="#808080"/><rect x="761" y="478" width="1" height="4" fill="#808080"/><rect x="786" y="478" width="1" height="2" fill="#808080"/><rect x="812" y="478" width="1" height="2" fill="#808080"/><rect x="838" y="478" width="1" height="2" fill="#808080"/><rect x="864" y="478" width="1" height="4" fill="#808080"/><rect x="889" y="478" width="1" height="2" fill="#808080"/><rect x="915" y="478" width="1" height="2" fill="#808080"/></svg>
<div class="t" style="left:481.90px;top:188px;width:66.71px;transform-origin:100% 50%;transform:scaleX(0.9717);">Digital photos</div>
<div class="t" style="left:470.84px;top:216px;width:77.77px;transform-origin:100% 50%;transform:scaleX(1.0084);">scanned photos</div>
<div class="t" style="left:475.78px;top:245px;width:72.83px;transform-origin:100% 50%;transform:scaleX(0.9957);">TLG thesaurus</div>
<div class="t" style="left:475.17px;top:273px;width:73.44px;transform-origin:100% 50%;transform:scaleX(0.9425);">ΤΟΠΩΝΥΜΙΚΑ</div>
<div class="t" style="left:478.23px;top:301px;width:70.38px;transform-origin:100% 50%;transform:scaleX(0.9665);">Ηχογραφήσεις</div>
<div class="t" style="left:463.84px;top:329px;width:84.77px;transform-origin:100% 50%;transform:scaleX(0.9569);">Μαθητική ηχώ 25</div>
<div class="t" style="left:503.93px;top:358px;width:44.68px;transform-origin:100% 50%;transform:scaleX(0.9763);">periodiko</div>
<div class="t" style="left:427.42px;top:386px;width:121.19px;transform-origin:100% 50%;transform:scaleX(0.9441);">ΒΑΛΚΑΝΙΚΟΙ ΠΟΛΕΜΟΙ</div>
<div class="t" style="left:519.25px;top:414px;width:29.36px;transform-origin:100% 50%;transform:scaleX(0.9678);">[Files]</div>
<div class="t" style="left:512.47px;top:443px;width:36.15px;transform-origin:100% 50%;transform:scaleX(1.0131);">papous</div>
<div class="t" style="left:501.47px;top:471px;width:47.15px;transform-origin:100% 50%;transform:scaleX(0.9592);">apo kinito</div>
<div class="t" style="left:552.438px;top:484px;">0</div>
<div class="t" style="left:649.062px;top:484px;">500</div>
<div class="t" style="left:747.219px;top:484px;">1.000</div>
<div class="t" style="left:849.969px;top:484px;">1.500</div>
<div class="t" style="left:713.3px;top:499px;transform:scaleX(0.9766);">Size, MB</div>
<div class="a" style="left:598px;top:147px;width:82px;height:18px;background:#fff;border:1px solid #000"></div>
<div class="t" style="font-size:13px;line-height:15px;height:15px;font-weight:bold;left:605px;top:149px;">D:\thanasis</div>
<div class="a" style="left:507px;top:528px;width:330px;height:18px;background:#000"></div>
<div class="a" style="left:504px;top:525px;width:330px;height:18px;background:#fff;border:1px solid #000"></div>
<div class="a" style="left:610px;top:525px;width:1px;height:18px;background:#000"></div>
<div class="a" style="left:715px;top:525px;width:1px;height:18px;background:#000"></div>
<div class="a" style="left:509px;top:529px;width:11px;height:10px;background:#FFFF00;border:1px solid #000"></div>
<div class="a" style="left:614px;top:529px;width:11px;height:10px;background:#008000;border:1px solid #000"></div>
<div class="a" style="left:719px;top:529px;width:11px;height:10px;background:#0000FF;border:1px solid #000"></div>
<div class="t" style="left:523px;top:528px;transform:scaleX(0.9957);">Disk space usage</div>
<div class="t" style="left:628px;top:528px;">Size</div>
<div class="t" style="left:733px;top:528px;">Compressed size</div>
<div class="a" style="left:946px;top:130px;width:17px;height:434px;background:#F6F4EB;background-image:repeating-conic-gradient(#fff 0 25%,#ECE9D8 0 50%);background-size:2px 2px"></div>
<div class="a" style="left:946px;top:130px;width:17px;height:17px;background:#ECE9D8;border:1px solid;border-color:#F1EFE2 #716F64 #716F64 #F1EFE2;box-shadow:inset 1px 1px 0 #fff,inset -1px -1px 0 #ACA899"></div>
<div class="a" style="left:946px;top:147px;width:17px;height:17px;background:#ECE9D8;border:1px solid;border-color:#F1EFE2 #716F64 #716F64 #F1EFE2;box-shadow:inset 1px 1px 0 #fff,inset -1px -1px 0 #ACA899"></div>
<div class="a" style="left:946px;top:547px;width:17px;height:17px;background:#ECE9D8;border:1px solid;border-color:#F1EFE2 #716F64 #716F64 #F1EFE2;box-shadow:inset 1px 1px 0 #fff,inset -1px -1px 0 #ACA899"></div>
<svg style="left:951px;top:136px" width="7" height="4" viewBox="0 0 7 4"><path d="M0 4h7L3.500 0z" fill="#000"/></svg>
<svg style="left:951px;top:554px" width="7" height="4" viewBox="0 0 7 4"><path d="M0 0h7L3.500 4z" fill="#000"/></svg>
<svg style="left:821px;top:135.5px" width="12" height="21" viewBox="0 0 12 21" ><path d="M0.500 0.800V16.800L4.100 13.400L6.800 20L9.400 19L6.700 12.500H11.700z" fill="#fff" stroke="#000" stroke-width="1"/></svg>
<div class="hdr" style="left:4px;top:566px;width:960px;height:20px"></div>
<div class="t" style="font-size:12px;line-height:14px;height:14px;font-weight:bold;color:#DEE7FB;left:9.3px;top:570px;transform:scaleX(0.9670);-webkit-text-stroke:.4px;">Drives information</div>
<svg style="left:949px;top:571px" width="10" height="10" viewBox="0 0 10 10"><path d="M1 1L9 9M9 1L1 9" stroke="#fff" stroke-width="2.200"/></svg>
<div class="a" style="left:4px;top:586px;width:961px;height:1px;background:#fff"></div>
<div class="a" style="left:4px;top:587px;width:961px;height:78px;background:#fff;border:1px solid;border-color:#ACA899 #fff #fff #ACA899"></div>
<div class="a" style="left:5px;top:588px;width:959px;height:76px;border:1px solid;border-color:#716F64 #F1EFE2 #F1EFE2 #716F64"></div>
<div class="a" style="left:6px;top:589px;width:940px;height:16px;background:#ECE9D8;border-bottom:1px solid #8E8B7E;border-top:1px solid #fff"></div>
<div class="a" style="left:195px;top:589px;width:1px;height:16px;background:#8E8B7E"></div>
<div class="a" style="left:196px;top:589px;width:1px;height:15px;background:#fff"></div>
<div class="t" style="left:12.5px;top:591.5px;transform:scaleX(0.9372);">Name</div>
<div class="a" style="left:320px;top:589px;width:1px;height:16px;background:#8E8B7E"></div>
<div class="a" style="left:321px;top:589px;width:1px;height:15px;background:#fff"></div>
<div class="t" style="left:203px;top:591.5px;transform:scaleX(0.9343);">Size</div>
<div class="a" style="left:463px;top:589px;width:1px;height:16px;background:#8E8B7E"></div>
<div class="a" style="left:464px;top:589px;width:1px;height:15px;background:#fff"></div>
<div class="t" style="left:328px;top:591.5px;transform:scaleX(0.9282);">Free</div>
<div class="a" style="left:543px;top:589px;width:1px;height:16px;background:#8E8B7E"></div>
<div class="a" style="left:544px;top:589px;width:1px;height:15px;background:#fff"></div>
<div class="t" style="left:471px;top:591.5px;transform:scaleX(0.9691);">Drive type</div>
<div class="a" style="left:612px;top:589px;width:1px;height:16px;background:#8E8B7E"></div>
<div class="a" style="left:613px;top:589px;width:1px;height:15px;background:#fff"></div>
<div class="t" style="left:551px;top:591.5px;transform:scaleX(0.9258);">File system</div>
<div class="a" style="left:685px;top:589px;width:1px;height:16px;background:#8E8B7E"></div>
<div class="a" style="left:686px;top:589px;width:1px;height:15px;background:#fff"></div>
<div class="t" style="left:620px;top:591.5px;transform:scaleX(0.9275);">Cluster size</div>
<div class="a" style="left:771px;top:589px;width:1px;height:16px;background:#8E8B7E"></div>
<div class="a" style="left:772px;top:589px;width:1px;height:15px;background:#fff"></div>
<div class="t" style="left:693px;top:591.5px;transform:scaleX(0.9770);">Status</div>
<div class="a" style="left:6px;top:605px;width:940px;height:59px;overflow:hidden">
<div class="a" style="left:0;top:2px;width:940px;height:1px;background:#ECE9D8"></div>
<div class="a" style="left:0;top:19px;width:940px;height:1px;background:#ECE9D8"></div>
<div class="a" style="left:0;top:36px;width:940px;height:1px;background:#ECE9D8"></div>
<div class="a" style="left:0;top:53px;width:940px;height:1px;background:#ECE9D8"></div>
<div class="a" style="left:190px;top:0;width:1px;height:59px;background:#ECE9D8"></div>
<div class="a" style="left:315px;top:0;width:1px;height:59px;background:#ECE9D8"></div>
<div class="a" style="left:458px;top:0;width:1px;height:59px;background:#ECE9D8"></div>
<div class="a" style="left:538px;top:0;width:1px;height:59px;background:#ECE9D8"></div>
<div class="a" style="left:607px;top:0;width:1px;height:59px;background:#ECE9D8"></div>
<div class="a" style="left:680px;top:0;width:1px;height:59px;background:#ECE9D8"></div>
<div class="a" style="left:766px;top:0;width:1px;height:59px;background:#ECE9D8"></div>
</div>
<div class="a" style="left:24px;top:642px;width:172px;height:16px;background:#316AC5"></div>
<div class="a" style="left:197px;top:642px;width:124px;height:16px;background:#316AC5"></div>
<div class="a" style="left:322px;top:642px;width:142px;height:16px;background:#316AC5"></div>
<div class="a" style="left:465px;top:642px;width:79px;height:16px;background:#316AC5"></div>
<div class="a" style="left:545px;top:642px;width:68px;height:16px;background:#316AC5"></div>
<div class="a" style="left:614px;top:642px;width:72px;height:16px;background:#316AC5"></div>
<div class="a" style="left:687px;top:642px;width:85px;height:16px;background:#316AC5"></div>
<div class="t" style="color:#000;left:25.5px;top:610px;transform:scaleX(1.0367);">Δισκέτα 3,5 (A:)</div>
<div class="t" style="color:#000;left:470px;top:610px;transform:scaleX(0.9756);">Removable</div>
<div class="t" style="color:#000;left:693px;top:610px;transform:scaleX(0.9949);">Not scanned</div>
<div class="t" style="color:#000;left:26.8px;top:627px;transform:scaleX(0.9802);">Τοπικός δίσκος (C:)</div>
<div class="t" style="color:#000;left:203.3px;top:627px;transform:scaleX(0.9550);">55.003,77 MB</div>
<div class="t" style="color:#000;left:327px;top:627px;transform:scaleX(0.9589);">45.033,34 MB (81,87%)</div>
<div class="t" style="color:#000;left:470px;top:627px;transform:scaleX(0.9292);">Fixed</div>
<div class="t" style="color:#000;left:550px;top:627px;transform:scaleX(0.9402);">NTFS</div>
<div class="t" style="color:#000;left:619.3px;top:627px;transform:scaleX(0.9424);">4 KB</div>
<div class="t" style="color:#000;left:693px;top:627px;transform:scaleX(0.9949);">Not scanned</div>
<div class="t" style="color:#fff;left:26px;top:644px;transform:scaleX(1.0284);">Αρχεία (D:)</div>
<div class="t" style="color:#fff;left:203.3px;top:644px;transform:scaleX(0.9550);">183.468,86 MB</div>
<div class="t" style="color:#fff;left:327px;top:644px;transform:scaleX(0.9589);">46.572,36 MB (25,38%)</div>
<div class="t" style="color:#fff;left:470px;top:644px;transform:scaleX(0.9292);">Fixed</div>
<div class="t" style="color:#fff;left:550px;top:644px;transform:scaleX(0.9402);">NTFS</div>
<div class="t" style="color:#fff;left:619.3px;top:644px;transform:scaleX(0.9424);">4 KB</div>
<div class="t" style="color:#fff;left:693px;top:644px;transform:scaleX(0.9949);">Not scanned</div>
<svg style="left:7.5px;top:614px" width="17" height="10" viewBox="0 0 17 10" ><path d="M0.300 3.800Q0.300 3 1.200 2.600L5.500 0.400Q6.300 0 7.200 0.200L15.600 2.200Q16.500 2.400 16.500 3.200V5.400L8.800 9.600Q8.200 9.900 7.500 9.600L0.300 6z" fill="#5e5e5e"/><path d="M0.300 3.600Q0.300 3 1.200 2.600L5.500 0.400Q6.300 0 7.200 0.200L15.600 2.200Q16.700 2.500 15.800 3.100L8.800 6.900Q8.200 7.200 7.500 6.900L0.800 4.100z" fill="#cdcdcd"/><path d="M3.200 3.100L6.300 1.500L9 2.100L5.800 3.900z" fill="#fafafa"/><path d="M9.500 2.400L11.500 2.900L8.500 4.700L6.800 4.200z" fill="#ececec"/><path d="M0.300 3.900L8.100 7.200V9.800L0.300 6z" fill="#8e8e8e"/><path d="M8.200 7.200L16.500 3.200V5.400L8.200 9.800z" fill="#505050"/><path d="M12.400 6l1.600-.8v1.100l-1.600.8z" fill="#d0d0d0"/><path d="M1.500 5.200L7 7.700" stroke="#c8c8c8" stroke-width=".6"/></svg>
<svg style="left:13px;top:608px" width="8" height="10" viewBox="0 0 8 10" ><path d="M0.500 0.500h7v8.500l-1.500 1h-5.500z" fill="#6868c0" stroke="#34347e" stroke-width=".8"/><rect x="2" y="0.600" width="4" height="3.200" fill="#eef0fa"/><rect x="2.200" y="6" width="3.600" height="3.200" fill="#b8bce0"/></svg>
<svg style="left:7.5px;top:629px" width="17" height="10" viewBox="0 0 17 10" ><path d="M0.300 3.800Q0.300 3 1.200 2.600L5.500 0.400Q6.300 0 7.200 0.200L15.600 2.200Q16.500 2.400 16.500 3.200V5.400L8.800 9.600Q8.200 9.900 7.500 9.600L0.300 6z" fill="#5e5e5e"/><path d="M0.300 3.600Q0.300 3 1.200 2.600L5.500 0.400Q6.300 0 7.200 0.200L15.600 2.200Q16.700 2.500 15.800 3.100L8.800 6.900Q8.200 7.200 7.500 6.900L0.800 4.100z" fill="#cdcdcd"/><path d="M3.200 3.100L6.300 1.500L9 2.100L5.800 3.900z" fill="#fafafa"/><path d="M9.500 2.400L11.500 2.900L8.500 4.700L6.800 4.200z" fill="#ececec"/><path d="M0.300 3.900L8.100 7.200V9.800L0.300 6z" fill="#8e8e8e"/><path d="M8.200 7.200L16.500 3.200V5.400L8.200 9.800z" fill="#505050"/><path d="M12.400 6l1.600-.8v1.100l-1.600.8z" fill="#d0d0d0"/><path d="M1.500 5.200L7 7.700" stroke="#c8c8c8" stroke-width=".6"/></svg>
<svg style="left:7.5px;top:646px" width="17" height="10" viewBox="0 0 17 10" ><defs><pattern id="dz" width="2" height="2" patternUnits="userSpaceOnUse"><rect width="1" height="1" fill="#316AC5"/><rect x="1" y="1" width="1" height="1" fill="#316AC5"/></pattern></defs><path d="M0.300 3.800Q0.300 3 1.200 2.600L5.500 0.400Q6.300 0 7.200 0.200L15.600 2.200Q16.500 2.400 16.500 3.200V5.400L8.800 9.600Q8.200 9.900 7.500 9.600L0.300 6z" fill="#5e5e5e"/><path d="M0.300 3.600Q0.300 3 1.200 2.600L5.500 0.400Q6.300 0 7.200 0.200L15.600 2.200Q16.700 2.500 15.800 3.100L8.800 6.900Q8.200 7.200 7.500 6.900L0.800 4.100z" fill="#cdcdcd"/><path d="M3.200 3.100L6.300 1.500L9 2.100L5.800 3.900z" fill="#fafafa"/><path d="M9.500 2.400L11.500 2.900L8.500 4.700L6.800 4.200z" fill="#ececec"/><path d="M0.300 3.900L8.100 7.200V9.800L0.300 6z" fill="#8e8e8e"/><path d="M8.200 7.200L16.500 3.200V5.400L8.200 9.800z" fill="#505050"/><path d="M12.400 6l1.600-.8v1.100l-1.600.8z" fill="#d0d0d0"/><path d="M1.500 5.200L7 7.700" stroke="#c8c8c8" stroke-width=".6"/><path d="M0.500 4.200L6.500 0.500L16.500 3V5.600L9.500 9.600L0.500 6.600z" fill="url(#dz)" shape-rendering="crispEdges"/></svg>
<div class="a" style="left:6px;top:659px;width:940px;height:5px;overflow:hidden">
<svg style="left:3px;top:0" width="16" height="16" viewBox="0 0 16 16"><circle cx="8" cy="8" r="7" fill="#d8c8f0" stroke="#8a5ac0" stroke-width="1.200"/><circle cx="8" cy="8" r="3" fill="none" stroke="#a070d0" stroke-width="1.200"/></svg>
<div class="t" style="left:21px;top:2px;transform:scaleX(0.8989);">CASPER-F.Pro 820 (E:)</div>
<div class="t" style="left:464px;top:2px;">CD-ROM</div>
<div class="t" style="left:687px;top:2px;transform:scaleX(0.9949);">Not scanned</div>
</div>
<div class="a" style="left:946px;top:589px;width:17px;height:75px;background:linear-gradient(to right,#F3F1EC,#FEFEFB)"></div>
<div class="a" style="left:946px;top:589px;width:17px;height:17px;background:linear-gradient(to right,#C9D8FC,#B7CBF9);border:1px solid #fff;border-radius:3px;box-shadow:inset -1px -1px 0 #9FB5F0"></div>
<svg style="left:950px;top:593px" width="9" height="9" viewBox="0 0 9 9"><path d="M1 5.500L4.500 2L8 5.500" stroke="#4D6185" stroke-width="2" fill="none"/></svg>
<div class="a" style="left:946px;top:606px;width:17px;height:15px;background:linear-gradient(to right,#C9D8FC,#B7CBF9);border:1px solid #fff;border-radius:3px;box-shadow:inset -1px -1px 0 #9FB5F0"></div>
<div class="a" style="left:946px;top:647px;width:17px;height:17px;background:linear-gradient(to right,#C9D8FC,#B7CBF9);border:1px solid #fff;border-radius:3px;box-shadow:inset -1px -1px 0 #9FB5F0"></div>
<svg style="left:950px;top:651px" width="9" height="9" viewBox="0 0 9 9"><path d="M1 2L4.500 5.500L8 2" stroke="#4D6185" stroke-width="2" fill="none"/></svg>
<div class="a" style="left:5px;top:668px;width:149px;height:17px;border:1px solid;border-color:#ACA899 #fff #fff #ACA899"></div>
<div class="a" style="left:156px;top:668px;width:348px;height:17px;border:1px solid;border-color:#ACA899 #fff #fff #ACA899"></div>
<div class="a" style="left:506px;top:668px;width:197px;height:17px;border:1px solid;border-color:#ACA899 #fff #fff #ACA899"></div>
<div class="a" style="left:706px;top:668px;width:258px;height:17px;border:1px solid;border-color:#ACA899 #fff #fff #ACA899"></div>
<svg style="left:9px;top:672px" width="17" height="10" viewBox="0 0 17 10" ><path d="M0.300 3.800Q0.300 3 1.200 2.600L5.500 0.400Q6.300 0 7.200 0.200L15.600 2.200Q16.500 2.400 16.500 3.200V5.400L8.800 9.600Q8.200 9.900 7.500 9.600L0.300 6z" fill="#5e5e5e"/><path d="M0.300 3.600Q0.300 3 1.200 2.600L5.500 0.400Q6.300 0 7.200 0.200L15.600 2.200Q16.700 2.500 15.800 3.100L8.800 6.900Q8.200 7.200 7.500 6.900L0.800 4.100z" fill="#cdcdcd"/><path d="M3.200 3.100L6.300 1.500L9 2.100L5.800 3.900z" fill="#fafafa"/><path d="M9.500 2.400L11.500 2.900L8.500 4.700L6.800 4.200z" fill="#ececec"/><path d="M0.300 3.900L8.100 7.200V9.800L0.300 6z" fill="#8e8e8e"/><path d="M8.200 7.200L16.500 3.200V5.400L8.200 9.800z" fill="#505050"/><path d="M12.400 6l1.600-.8v1.100l-1.600.8z" fill="#d0d0d0"/><path d="M1.500 5.200L7 7.700" stroke="#c8c8c8" stroke-width=".6"/></svg>
<div class="t" style="left:28.5px;top:670px;transform:scaleX(0.9917);">Αρχεία (D:)</div>
<div class="t" style="left:158px;top:670px;transform:scaleX(0.9878);">Total: 183.468,86 MB / Free: 46.572,36 MB / Unused excess: 10,20 MB</div>
<div class="t" style="left:507px;top:670px;">Files: 7.060 / Folders: 114</div>
<svg style="left:951px;top:671px" width="13" height="13" viewBox="0 0 13 13"><path d="M13 1L1 13M13 5L5 13M13 9L9 13" stroke="#ACA899" stroke-width="1.600"/></svg>
<div class="a" style="left:4px;top:30px;width:961px;height:655px;border:1px solid #fff;pointer-events:none"></div>
</div></body></html>
